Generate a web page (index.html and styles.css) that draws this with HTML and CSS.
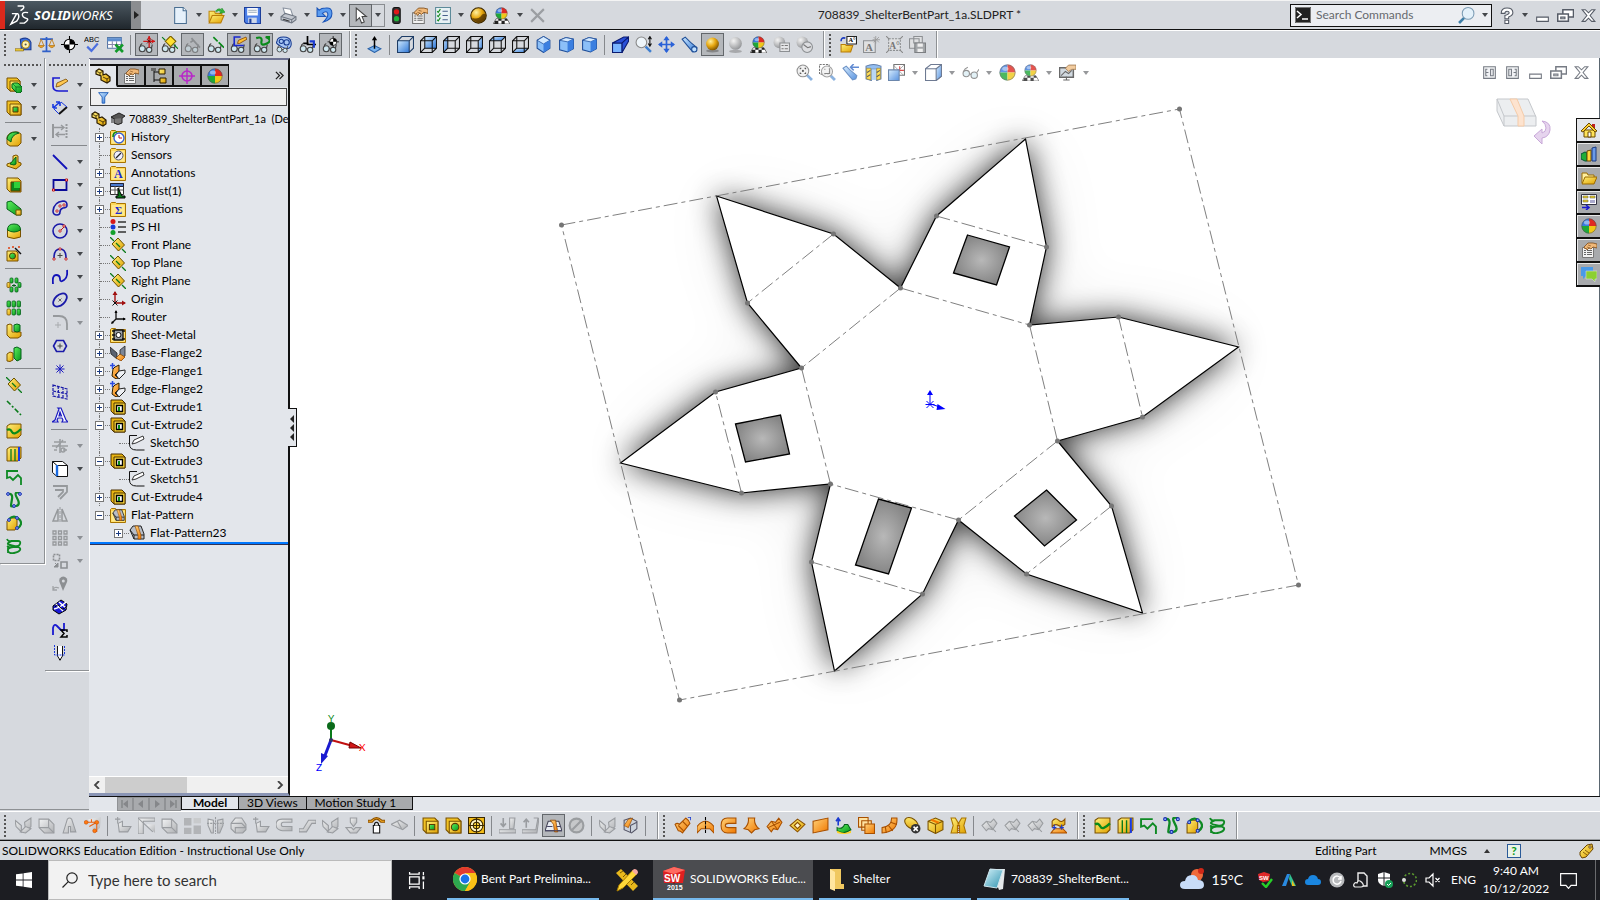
FILE: index.html
```html
<!DOCTYPE html>
<html lang="en">
<head>
  <meta charset="UTF-8">
  <title>708839_ShelterBentPart_1a.SLDPRT *</title>
  <link rel="stylesheet" href="styles.css">
</head>
<body>

<!-- icon sprite -->
<svg class="sprite" width="0" height="0" aria-hidden="true">
  <defs>
    <linearGradient id="gold" x1="0" y1="0" x2="1" y2="1"><stop offset="0" stop-color="#fff07a"/><stop offset="1" stop-color="#e0a000"/></linearGradient>
    <linearGradient id="green" x1="0" y1="0" x2="1" y2="1"><stop offset="0" stop-color="#5df05d"/><stop offset="1" stop-color="#06951c"/></linearGradient>
    <linearGradient id="blue" x1="0" y1="0" x2="1" y2="1"><stop offset="0" stop-color="#cfe9ff"/><stop offset="1" stop-color="#2f78d8"/></linearGradient>
    <linearGradient id="orange" x1="0" y1="0" x2="1" y2="1"><stop offset="0" stop-color="#ffd27a"/><stop offset="1" stop-color="#f07800"/></linearGradient>
    <linearGradient id="grey" x1="0" y1="0" x2="1" y2="1"><stop offset="0" stop-color="#f2f3f4"/><stop offset="1" stop-color="#aeb0b3"/></linearGradient>
    <linearGradient id="teal" x1="0" y1="0" x2="1" y2="1"><stop offset="0" stop-color="#d5f2fa"/><stop offset="1" stop-color="#2f93b0"/></linearGradient>
    <radialGradient id="ballg" cx=".35" cy=".3" r=".75"><stop offset="0" stop-color="#fff0a0"/><stop offset=".5" stop-color="#e8a810"/><stop offset="1" stop-color="#7a5000"/></radialGradient>
    <radialGradient id="balls" cx=".35" cy=".3" r=".8"><stop offset="0" stop-color="#f4f4f4"/><stop offset="1" stop-color="#8a8c8f"/></radialGradient>
    <radialGradient id="hole"><stop offset="0" stop-color="#b8b8b8"/><stop offset="1" stop-color="#868686"/></radialGradient>
  </defs>

  <!-- standard toolbar -->
  <symbol id="new" viewBox="0 0 16 16"><path d="M2.5 .5h8l3 3v12h-11z" fill="#e6f1fb" stroke="#4a6f92"/><path d="M10.5 .5v3h3" fill="#fff" stroke="#4a6f92"/></symbol>
  <symbol id="open" viewBox="0 0 16 16"><path d="M1 14V4h5l1 2h6v3" fill="url(#gold)" stroke="#c08a10"/><path d="M1 15l3-7h11l-3 7z" fill="url(#gold)" stroke="#b87c08"/><path d="M7 4q3-4 6-1V1l3 4-5 1 1-1.5q-2-2-4 0z" fill="#35b53a" stroke="#128a1c" stroke-width=".5"/></symbol>
  <symbol id="save" viewBox="0 0 16 16"><path d="M.5 .5h15v15H2L.5 14z" fill="#4b7fe8" stroke="#1d3f9a"/><path d="M3 1h10v7H3z" fill="#fff"/><path d="M4 3h8M4 5h8" stroke="#9ab"/><path d="M4 10h8v5H4z" fill="#cfd9ea"/><path d="M5 11h2v4H5z" fill="#1d3f9a"/></symbol>
  <symbol id="print" viewBox="0 0 16 16"><path d="M3 1l7 1 2 6H5z" fill="#fff" stroke="#8a93a0"/><path d="M1 9l4-3 10 3v3l-4 3-10-3z" fill="#c3c8d0" stroke="#6d7580"/><path d="M1 9l10 3 4-3M11 12v3" fill="none" stroke="#6d7580"/><path d="M3 11.500l6 2" stroke="#333"/></symbol>
  <symbol id="undo" viewBox="0 0 16 16"><path d="M1 1v8h8L6 6q4-3 5 0t-4 8q8-2 8-8t-6-5q-4 0-6 2z" fill="#5a9cf0" stroke="#1b55b8"/></symbol>
  <symbol id="cursor" viewBox="0 0 16 16"><path d="M4 1v12l3-3 2 5 2.5-1-2-5h4z" fill="#fff" stroke="#444"/></symbol>
  <symbol id="traffic" viewBox="0 0 16 16"><rect x="4.500" y=".5" width="7" height="15" rx="2" fill="#333" stroke="#111"/><circle cx="8" cy="4.500" r="2.500" fill="#e01818"/><circle cx="8" cy="11" r="2.500" fill="#1fb53a"/></symbol>
  <symbol id="props" viewBox="0 0 16 16"><path d="M1.500 5.500h11v10h-11z" fill="#f2f2f2" stroke="#777"/><path d="M3 8.500h2M3 10.500h2M3 12.500h2M6 8.500h5M6 10.500h5M6 12.500h5" stroke="#666"/><path d="M3 5l4-4h5l4 1v4l-4-1-2 2-2-1-2 2-1-2-1 1z" fill="#f0b878" stroke="#7c4a18" stroke-width=".8"/><path d="M7 3l3 1M6 5l3 1" stroke="#7c4a18" stroke-width=".6"/></symbol>
  <symbol id="list" viewBox="0 0 16 16"><path d="M1.500 .5h14v15h-14z" fill="#e8f1f4" stroke="#5d8b9a"/><path d="M3 4l1 1 2-3M3 8l1 1 2-3M3 12l1 1 2-3" fill="none" stroke="#128a1c"/><path d="M8 4h5M8 8h5M8 12h5" stroke="#47608a"/></symbol>
  <symbol id="ball" viewBox="0 0 16 16"><circle cx="8" cy="8" r="7.300" fill="url(#ballg)" stroke="#3c2800"/><path d="M2 10q5 2 8-1 2-4 5-2-1 7-7 7.500-5-1-6-4.500" fill="#4a2c00" opacity=".7"/></symbol>
  <symbol id="sphere" viewBox="0 0 16 16"><path d="M8 8V.5A7.500 7.500 0 0 0 .5 8z" fill="#3a7be0"/><path d="M8 8h7.500A7.500 7.500 0 0 0 8 .5z" fill="#e02a22"/><path d="M8 8H.5A7.500 7.500 0 0 0 8 15.500z" fill="#1fa838"/><path d="M8 8v7.500A7.500 7.500 0 0 0 15.500 8z" fill="#f0c818"/><ellipse cx="6" cy="4.500" rx="3" ry="2" fill="#fff" opacity=".45"/><circle cx="8" cy="8" r="7.200" fill="none" stroke="#555" stroke-width=".6"/></symbol>
  <symbol id="scene" viewBox="0 0 16 16"><path d="M3 11h10l3 5H0z" fill="#fff" stroke="#333" stroke-width=".6"/><path d="M2 13h3v-2h3v2h3v-2h2l1 2h-3v3H8v-3H5v3H1z" fill="#222"/><use href="#sphere" x="2" y="0" width="12" height="12"/></symbol>
  <symbol id="cross" viewBox="0 0 16 16"><path d="M2 2l12 12M14 2L2 14" stroke="#9b9ea2" stroke-width="2"/></symbol>
  <symbol id="term" viewBox="0 0 16 16"><path d="M0 0h16v16H0z" fill="#222"/><path d="M.5 .5h15v15H.5z" fill="none" stroke="#777"/><path d="M2 4l4 3.500L2 11" fill="none" stroke="#fff" stroke-width="1.500"/><path d="M7 12h6" stroke="#fff" stroke-width="1.500"/></symbol>
  <symbol id="lens" viewBox="0 0 16 16"><path d="M6 10l-5 5" stroke="#3f7fa8" stroke-width="2.500"/><circle cx="9.500" cy="6" r="5.500" fill="#e4f1fa" stroke="#7d9db5"/></symbol>
  <symbol id="help" viewBox="0 0 16 16"><path d="M3 6q0-5 5.500-5T14 5.500q0 2.500-4 4V11H6.500V8q4-1 4-2.500T8.500 4 6.500 6zM6.500 12.500H10v3H6.500z" fill="#fff" stroke="#555b66"/></symbol>
  <symbol id="min" viewBox="0 0 16 16"><path d="M2.500 9.500h11v4h-11z" fill="#fff" stroke="#555b66"/></symbol>
  <symbol id="restore" viewBox="0 0 16 16"><path d="M5.500 2.500h10v7h-10z" fill="#fff" stroke="#555b66" stroke-width="1.400"/><path d="M.7 6.500h10v7H.7z" fill="#fff" stroke="#555b66" stroke-width="1.400"/><path d="M3.500 9.500h4V11h-4z" fill="none" stroke="#555b66"/></symbol>
  <symbol id="close" viewBox="0 0 16 16"><path d="M2 2.500h3l3 3 3-3h3L9.500 8l4.500 5.500h-3l-3-3-3 3H2L6.500 8z" fill="#fff" stroke="#555b66"/></symbol>
  <symbol id="paneL" viewBox="0 0 16 16"><path d="M2.500 2.500h11v11h-11z" fill="#eef0f3" stroke="#555b66"/><path d="M6 5H4.500v6H6M4.500 8H7M9 5h2.500v6H9z" fill="none" stroke="#555b66"/></symbol>
  <symbol id="paneR" viewBox="0 0 16 16"><path d="M2.500 2.500h11v11h-11z" fill="#eef0f3" stroke="#555b66"/><path d="M10 5h1.500v6H10M11.500 8H9M4.500 5H7v6H4.500z" fill="none" stroke="#555b66"/></symbol>

  <!-- tools toolbar -->
  <symbol id="tape" viewBox="0 0 16 16"><path d="M5 3q8-3 10 3v7H6z" fill="#3a6fe0" stroke="#1a3a90"/><circle cx="10" cy="8" r="3.500" fill="#fff4b0" stroke="#a87a00"/><circle cx="10" cy="8" r="1" fill="#555"/><path d="M0 12h8v2H0z" fill="#ffdf40" stroke="#7a5a00" stroke-width=".6"/></symbol>
  <symbol id="scale" viewBox="0 0 16 16"><path d="M2 3h12M8 1v13M4 14.500h8" stroke="#2f5fc8" stroke-width="1.600"/><path d="M3 3L.8 9M3 3l2.500 6M13 3l-2.500 6M13 3l2.500 6" stroke="#c07a10" stroke-width=".8"/><path d="M0 9h6q-3 4-6 0M10 9h6q-3 4-6 0" fill="#f5a623" stroke="#a0660a" stroke-width=".6"/></symbol>
  <symbol id="cg" viewBox="0 0 16 16"><path d="M8 0v16M0 8h16" stroke="#000"/><circle cx="8" cy="8" r="5" fill="#fff" stroke="#000"/><path d="M8 8V3a5 5 0 0 1 5 5zM8 8v5a5 5 0 0 1-5-5z" fill="#000"/></symbol>
  <symbol id="xls" viewBox="0 0 16 16"><path d="M.5 1.500h13v10H.5z" fill="#fff" stroke="#5578a8"/><path d="M.5 2h13v3H.5z" fill="#5f8fd0"/><path d="M.5 8h13M5 5v6M9 5v6" stroke="#88a"/><path d="M8 8l7 7M15 8l-7 7" stroke="#129a2a" stroke-width="2.500"/></symbol>
  <symbol id="glasses" viewBox="0 0 16 16"><circle cx="4" cy="12" r="2.800" fill="#cfe8f0" stroke="#444"/><circle cx="10.500" cy="13" r="2.500" fill="#cfe8f0" stroke="#444"/><path d="M6.500 12h2M2 10q0-2 2-3M12.500 12l1-4" fill="none" stroke="#444"/></symbol>
  <symbol id="v-origin" viewBox="0 0 16 16"><use href="#glasses" width="16" height="16"/><path d="M5 5h11M10.500 0v11" stroke="#d01818" stroke-width="1.200"/><path d="M10.500 0l-2 3h4zM16 5l-3-2v4z" fill="#d01818"/><path d="M8.500 3l4 4M12.500 3l-4 4" stroke="#400" stroke-width=".8"/></symbol>
  <symbol id="v-plane" viewBox="0 0 16 16"><use href="#glasses" width="16" height="16"/><path d="M4 5l5-5 5 5-5 5z" fill="#ffe030" stroke="#7a6000"/><path d="M1 1l3 3M12 8l4 4" stroke="#0a7a1a"/></symbol>
  <symbol id="v-temp" viewBox="0 0 16 16"><use href="#glasses" width="16" height="16" opacity=".5"/><path d="M7 2l8 9M6 6l3-2" stroke="#8a8d90" stroke-width="1.600"/></symbol>
  <symbol id="v-axis" viewBox="0 0 16 16"><use href="#glasses" width="16" height="16"/><path d="M6 1l4 4M11 6l1 1M12 7l4 4" stroke="#0a8a1a" stroke-width="1.500"/></symbol>
  <symbol id="v-sketch" viewBox="0 0 16 16"><use href="#glasses" width="16" height="16"/><path d="M10 1H4v8h9" fill="none" stroke="#1a2ad0" stroke-width="1.500"/><path d="M7 7l1-3 7-3 1 2-7 4z" fill="#ffc030" stroke="#7a3a00" stroke-width=".7"/></symbol>
  <symbol id="v-curve" viewBox="0 0 16 16"><use href="#glasses" width="16" height="16"/><path d="M3 2q6-2 5 3t5 2-1-6h4" fill="none" stroke="#0a8a1a" stroke-width="2"/></symbol>
  <symbol id="v-part" viewBox="0 0 16 16"><path d="M1 5q0-4 6-4t7 4-1 6-8-1-4-5z" fill="#a8c6f4" stroke="#173a90"/><circle cx="5" cy="5" r="2" fill="none" stroke="#173a90"/><circle cx="10" cy="6" r="2.500" fill="none" stroke="#173a90"/><use href="#glasses" y="3" width="13" height="13"/></symbol>
  <symbol id="v-live" viewBox="0 0 16 16"><use href="#glasses" width="16" height="16"/><path d="M8 0v8h8M4 7h5" stroke="#000" stroke-width="1.600" fill="none"/><path d="M10 5h4v6" stroke="#1a3ad0" stroke-width="2" fill="none"/></symbol>
  <symbol id="v-cg" viewBox="0 0 16 16"><use href="#glasses" width="16" height="16"/><use href="#cg" x="5" y="0" width="11" height="11"/></symbol>
  <symbol id="normal" viewBox="0 0 16 16"><path d="M2 12l6-3 6 3-6 3.500z" fill="#7ab4f0" stroke="#2a62a8"/><path d="M8 12V2" stroke="#000" stroke-width="1.400"/><path d="M8 0L5.500 4h5z" fill="#000"/></symbol>
  <symbol id="c-front" viewBox="0 0 16 16"><path d="M.5 4.500h11v11H.5z" fill="url(#blue)"/><path d="M.5 4.500h11v11H.5zM.5 4.500l4-4h11v11l-4 4M11.500 4.500l4-4" fill="none" stroke="#1d3c66"/></symbol>
  <symbol id="c-back" viewBox="0 0 16 16"><path d="M4.500 .5h11v11h-11z" fill="url(#blue)"/><path d="M.5 4.500h11v11H.5zM.5 4.500l4-4h11v11l-4 4M11.500 4.500l4-4M4.500 .5v11h11M.5 15.500l4-4" fill="none" stroke="#111"/></symbol>
  <symbol id="c-left" viewBox="0 0 16 16"><path d="M.5 4.500l4-4v11l-4 4z" fill="url(#blue)"/><path d="M.5 4.500h11v11H.5zM.5 4.500l4-4h11v11l-4 4M11.500 4.500l4-4M4.500 .5v11h11M.5 15.500l4-4" fill="none" stroke="#111"/></symbol>
  <symbol id="c-right" viewBox="0 0 16 16"><path d="M11.500 4.500l4-4v11l-4 4z" fill="url(#blue)"/><path d="M.5 4.500h11v11H.5zM.5 4.500l4-4h11v11l-4 4M11.500 4.500l4-4M4.500 .5v11h11M.5 15.500l4-4" fill="none" stroke="#111"/></symbol>
  <symbol id="c-top" viewBox="0 0 16 16"><path d="M.5 4.500l4-4h11l-4 4z" fill="url(#blue)"/><path d="M.5 4.500h11v11H.5zM.5 4.500l4-4h11v11l-4 4M11.500 4.500l4-4M4.500 .5v11h11M.5 15.500l4-4" fill="none" stroke="#111"/></symbol>
  <symbol id="c-bot" viewBox="0 0 16 16"><path d="M.5 15.500l4-4h11l-4 4z" fill="url(#blue)"/><path d="M.5 4.500h11v11H.5zM.5 4.500l4-4h11v11l-4 4M11.500 4.500l4-4M4.500 .5v11h11M.5 15.500l4-4" fill="none" stroke="#111"/></symbol>
  <symbol id="c-iso" viewBox="0 0 16 16"><path d="M8 .5l6 3.500v7.500l-6 4-6-4V4z" fill="#8cc0f8" stroke="#1c4c98"/><path d="M8 .5l6 3.500-6 3.500L2 4z" fill="#d4eaff" stroke="#1c4c98" stroke-width=".7"/><path d="M8 7.500L14 4v7.500l-6 4z" fill="#3b7fe0"/></symbol>
  <symbol id="c-tri" viewBox="0 0 16 16"><path d="M1.500 4l6-2.500 7 1.500v9L9 15l-7.500-2z" fill="#8cc0f8" stroke="#1c4c98"/><path d="M1.500 4l6-2.500 7 1.500L9 5.500z" fill="#d4eaff" stroke="#1c4c98" stroke-width=".7"/><path d="M9 5.500L14.500 3v9L9 15z" fill="#3b7fe0"/></symbol>
  <symbol id="persp" viewBox="0 0 16 16"><path d="M.5 6.500h9v9h-9z" fill="#7ab4ff" stroke="#0a1a70"/><path d="M.5 6.500L11 1h4.500l-6 5.500zM9.500 6.500l6-5.500v4l-6 10.500z" fill="#2a50d8" stroke="#0a1a70"/></symbol>
  <symbol id="zoomio" viewBox="0 0 16 16"><circle cx="6" cy="6" r="5" fill="#eef5fa" stroke="#888"/><path d="M10 10l5 5" stroke="#3f7fd0" stroke-width="2.400"/><path d="M14 1v8M12.500 3L14 .5 15.500 3M12.500 7L14 9.500 15.500 7" stroke="#111" fill="none"/></symbol>
  <symbol id="pan" viewBox="0 0 16 16"><path d="M8 1v14M1 8h14" stroke="#2a62d8" stroke-width="1.600"/><path d="M8 0l3 4H5zM8 16l3-4H5zM0 8l4-3v6zM16 8l-4-3v6z" fill="#2a62d8"/></symbol>
  <symbol id="flash" viewBox="0 0 16 16"><path d="M1 3l3-2 5 5 6 5-1 3-3 1-5-6z" fill="url(#blue)" stroke="#1f4f98"/><circle cx="12.500" cy="12.500" r="2.500" fill="#bfe0ff" stroke="#1f4f98"/></symbol>
  <symbol id="goldball" viewBox="0 0 16 16"><ellipse cx="8" cy="14" rx="6" ry="1.500" fill="#555" opacity=".5"/><circle cx="8" cy="7.500" r="6" fill="url(#ballg)"/></symbol>
  <symbol id="greyball" viewBox="0 0 16 16"><ellipse cx="8" cy="14.500" rx="6" ry="1.500" fill="#777" opacity=".5"/><circle cx="8" cy="7" r="6" fill="url(#balls)"/></symbol>
  <symbol id="greylist" viewBox="0 0 16 16"><circle cx="6" cy="6" r="5.500" fill="url(#balls)"/><path d="M6.500 6.500h9v8h-9z" fill="#e4e5e7" stroke="#8c8f92"/><path d="M8 9h2M8 12h2M11 9h3M11 12h3" stroke="#777"/></symbol>
  <symbol id="greyclock" viewBox="0 0 16 16"><circle cx="6" cy="6" r="5.500" fill="url(#balls)"/><circle cx="10.500" cy="10.500" r="5" fill="#dcdde0" stroke="#8c8f92"/><path d="M7 8l4 3 3-1" stroke="#777" fill="none"/></symbol>
  <symbol id="an-save" viewBox="0 0 16 16"><path d="M.5 2.500h9v9h-9zM4.500 .5h8v6h-8z" fill="#dfe0e2" stroke="#8c8f92"/><path d="M5.500 6.500h10v9h-10z" fill="#a4a7aa" stroke="#7c7f82"/><path d="M8 7h5v3H8zM8 12h5v3H8z" fill="#eee"/></symbol>

  <!-- heads-up view -->
  <symbol id="zfit" viewBox="0 0 16 16"><path d="M10 10l5 5" stroke="#6f9fd8" stroke-width="2.600"/><circle cx="6.500" cy="6.500" r="5.500" fill="#eee" stroke="#777"/><path d="M4 5V4h1M8 4h1v1M9 8v1H8M5 9H4V8" stroke="#333" fill="none"/><circle cx="6.500" cy="6.500" r="1" fill="#333"/></symbol>
  <symbol id="zarea" viewBox="0 0 16 16"><path d="M11 11l4 4" stroke="#6f9fd8" stroke-width="2.600"/><path d="M.5 .5h9v9h-9z" fill="none" stroke="#555" stroke-dasharray="2 1"/><circle cx="7.500" cy="7" r="5.200" fill="#eee" fill-opacity=".8" stroke="#888"/><path d="M5 5h1M5 9h5V4" stroke="#666" fill="none"/></symbol>
  <symbol id="prev" viewBox="0 0 16 16"><path d="M1 4l3-2 4 4 6 5-1 3-3 1-5-6z" fill="url(#blue)" stroke="#4a78b8"/><path d="M8 3h8M11 0L8 3l3 3" stroke="#3a6fc8" stroke-width="1.400" fill="none"/></symbol>
  <symbol id="section" viewBox="0 0 16 16"><path d="M1 2q7-3 14 0v12l-4 1.500V5H6v10.500L1 14z" fill="#7ab0f0" stroke="#3a5f98"/><path d="M6 5h5v10H6z" fill="#a8ccf4"/><path d="M1.500 4h4v11l-4-1zM11 4h3.500v10L11 15z" fill="#ffd428" stroke="#776010" stroke-width=".6"/><path d="M2 8l3-2M2 12l3-2M11 8l3-2M11 12l3-2" stroke="#333"/></symbol>
  <symbol id="vorient" viewBox="0 0 16 16"><path d="M5.500 .5h10v10h-10z" fill="#fff" stroke="#555"/><path d="M5 1l10 10M15 1l-4 4" stroke="#777" stroke-width=".7"/><path d="M11 2v4M9 6h6" stroke="#d02020"/><path d="M.5 5.500h10v10H.5z" fill="url(#blue)" stroke="#486a98"/></symbol>
  <symbol id="dstyle" viewBox="0 0 16 16"><path d="M.5 4.500l5-4h10v11l-5 4H.5z" fill="#fff" stroke="#4a5a78"/><path d="M10.500 4.500l5-4v11l-5 4z" fill="url(#blue)" stroke="#4a5a78"/><path d="M.5 4.500h10" stroke="#4a5a78"/></symbol>
  <symbol id="specs" viewBox="0 0 16 16"><circle cx="4" cy="9" r="3" fill="#dceef5" stroke="#777"/><circle cx="11.500" cy="10.500" r="3" fill="#dceef5" stroke="#777"/><path d="M7 9l1.500 1M1.500 7q1-3 4-4M14 8l2-3" fill="none" stroke="#777"/></symbol>
  <symbol id="monitor" viewBox="0 0 16 16"><path d="M.5 3.500h13v9H.5z" fill="#c8d2da" stroke="#444" stroke-width="1.400"/><path d="M4 15h6M7 12v3M2 11l4-4 3 2 3-3" stroke="#444" fill="none"/><path d="M6 4l3-3h7v4h-4L9 7z" fill="#f0c088" stroke="#8a5a28" stroke-width=".8"/></symbol>

  <!-- features rail -->
  <symbol id="extrude" viewBox="0 0 16 16"><path d="M1 1h10l3 3v8l-2 2H4l-3-3z" fill="#f2c224" stroke="#7a5200"/><path d="M4 4h10v8l-2 2H4z" fill="url(#gold)" stroke="#7a5200"/><path d="M6 7l2-1h4l4 4v4l-2 2h-3l-5-5z" fill="url(#green)" stroke="#04621a"/><path d="M10 10h5M10 10v5M10 10L7 7" stroke="#04621a" fill="none" stroke-width=".7"/></symbol>
  <symbol id="cut" viewBox="0 0 16 16"><path d="M1 1h11l3 3v11H4l-3-3z" fill="#f2c224" stroke="#7a5200"/><path d="M4 4h11v11H4z" fill="url(#gold)" stroke="#7a5200"/><path d="M7 7h5v5H7z" fill="url(#green)" stroke="#5a3c00"/></symbol>
  <symbol id="fillet" viewBox="0 0 16 16"><path d="M1 6q2-5 8-5h3l3 2v9l-3 3H4l-3-2z" fill="url(#gold)" stroke="#7a5200"/><path d="M1 8q1-7 9-7l3 1q-8 2-8 9z" fill="url(#green)" stroke="#04621a"/></symbol>
  <symbol id="rib" viewBox="0 0 16 16"><path d="M1 10l6-2V2l3-1 2 1v6l3 1v2l-5 4-9-3z" fill="url(#gold)" stroke="#7a5200"/><path d="M4 10l6-7v7l-2 1z" fill="url(#green)" stroke="#04621a"/></symbol>
  <symbol id="shell" viewBox="0 0 16 16"><path d="M1 1h11l3 3v11H4l-3-3z" fill="url(#gold)" stroke="#7a5200"/><path d="M5 5h9v9H5z" fill="#088a1c" stroke="#5a3c00"/><path d="M8 5h6v6H8z" fill="#2fd03a"/></symbol>
  <symbol id="draft" viewBox="0 0 16 16"><path d="M1 2l4-1 10 8v6h-5L1 9z" fill="url(#green)" stroke="#04621a"/><path d="M10 10h5v5h-5z" fill="url(#gold)" stroke="#7a5200"/></symbol>
  <symbol id="dome" viewBox="0 0 16 16"><path d="M1.500 6v8q6.500 3 13 0V6z" fill="url(#gold)" stroke="#7a5200"/><path d="M1.500 7q0-6 6.500-6t6.500 6q-6.500 4-13 0z" fill="url(#green)" stroke="#04621a"/></symbol>
  <symbol id="hole-w" viewBox="0 0 16 16"><path d="M1 5h9l2 2v8H1z" fill="url(#gold)" stroke="#7a5200"/><circle cx="6.500" cy="10" r="3" fill="url(#green)" stroke="#5a3c00"/><path d="M9 2l6 6" stroke="#111" stroke-width="1.400"/><path d="M2 2h2M6 1h2M12 1h2" stroke="#e04010" stroke-width="1.500"/></symbol>
  <symbol id="cpat" viewBox="0 0 16 16"><g fill="url(#green)" stroke="#04621a" stroke-width=".8"><rect x="4" y="1" width="3" height="5" rx="1"/><rect x="9" y="1" width="3" height="5" rx="1"/><rect x="12" y="5.500" width="3" height="5" rx="1"/><rect x="4" y="10" width="3" height="5" rx="1"/><rect x="9" y="10" width="3" height="5" rx="1"/></g><rect x="1" y="5.500" width="3" height="5" rx="1" fill="url(#gold)" stroke="#7a5200" stroke-width=".8"/><path d="M8 7v3M6 8.500h4" stroke="#04621a"/></symbol>
  <symbol id="lpat" viewBox="0 0 16 16"><g fill="url(#green)" stroke="#04621a" stroke-width=".8"><rect x="1" y="1" width="3.500" height="6" rx="1"/><rect x="6" y="1" width="3.500" height="6" rx="1"/><rect x="11" y="1" width="3.500" height="6" rx="1"/><rect x="6" y="9" width="3.500" height="6" rx="1"/><rect x="11" y="9" width="3.500" height="6" rx="1"/></g><rect x="1" y="9" width="3.500" height="6" rx="1" fill="url(#gold)" stroke="#7a5200" stroke-width=".8"/></symbol>
  <symbol id="move" viewBox="0 0 16 16"><path d="M1 2l3-1 2 1v7h9v4l-3 2H4l-3-3z" fill="url(#gold)" stroke="#7a5200"/><path d="M8 2l3-1 3 1v6l-3 1-3-1z" fill="url(#green)" stroke="#04621a"/></symbol>
  <symbol id="mirror" viewBox="0 0 16 16"><path d="M1 8l3-2 3 1v7l-3 1.500L1 15z" fill="url(#gold)" stroke="#7a5200"/><path d="M8 2l3-1 4 2v10l-4 2-3-3z" fill="url(#green)" stroke="#04621a"/></symbol>
  <symbol id="plane" viewBox="0 0 16 16"><path d="M0 0l4 4M12 12l4 4" stroke="#0a7a1a" stroke-width="1.300"/><path d="M2 7l6-6 6.500 7-6 6z" fill="url(#gold)" stroke="#6a5000"/><path d="M6 6l4 4" stroke="#0a7a1a" stroke-width="1.200"/></symbol>
  <symbol id="axis" viewBox="0 0 16 16"><path d="M1 1l14 14" stroke="#0a7a1a" stroke-width="1.600" stroke-dasharray="5 2 2 2"/></symbol>
  <symbol id="split" viewBox="0 0 16 16"><path d="M1 3l3-2h11v11l-3 3H1z" fill="url(#gold)" stroke="#7a5200"/><path d="M1 7q3-2 5 2t9-3" fill="none" stroke="#0a8a1a" stroke-width="2.200"/></symbol>
  <symbol id="proj" viewBox="0 0 16 16"><path d="M1 3l3-2h11v11l-3 3H1z" fill="url(#gold)" stroke="#7a5200"/><path d="M5 3v12M9 3v12" stroke="#0a7a1a" stroke-width="1.300"/><path d="M13 1v14" stroke="#1a3ae0" stroke-width="2"/></symbol>
  <symbol id="comp" viewBox="0 0 16 16"><path d="M12 2H1v7l3-1 3 3 5-5 3 3v7" fill="none" stroke="#0f8a24" stroke-width="1.800"/></symbol>
  <symbol id="xyz" viewBox="0 0 16 16"><path d="M2 2q5-1 4 5t-1 7 5 0 1-8 3-5" fill="none" stroke="#0f8a24" stroke-width="2.200"/><g fill="#8fb8ff" stroke="#1a2ab0"><circle cx="2" cy="2" r="1.400"/><circle cx="14" cy="2" r="1.400"/><circle cx="8" cy="14" r="1.400"/></g></symbol>
  <symbol id="thru" viewBox="0 0 16 16"><path d="M1 6l3-3h7v9l-2 3H1z" fill="url(#gold)" stroke="#7a5200"/><path d="M3 4q5-5 10 0t-2 10" fill="none" stroke="#0f8a24" stroke-width="2.200"/><g fill="#8fb8ff" stroke="#1a2ab0"><circle cx="3" cy="5" r="1.400"/><circle cx="11" cy="3" r="1.400"/><circle cx="11" cy="13" r="1.400"/></g></symbol>
  <symbol id="helix" viewBox="0 0 16 16"><path d="M1 1q1 3 4 2h7q3 0 2 3t-6 2-6-2 4-3M1 8q3 2 6 1h5q3 1 2 3t-6 3-6-2 5-4M2 15V9" fill="none" stroke="#0f8a24" stroke-width="1.800"/></symbol>

  <!-- sketch rail -->
  <symbol id="sketch" viewBox="0 0 16 16"><path d="M8 1H1v8q0 5 6 5h9" fill="none" stroke="#1a1ad0" stroke-width="1.600"/><path d="M4 10l1-4 9-4 2 2-8 5z" fill="#ffc850" stroke="#7a4a00" stroke-width=".8"/></symbol>
  <symbol id="dim" viewBox="0 0 16 16"><path d="M7 14l8-7" stroke="#111" stroke-width="2"/><path d="M1 8l7-6M1 8V4M1 8h4M8 2H4M8 2v4" stroke="#1a3ae0" stroke-width="1.600" fill="none"/><path d="M2 9l5 5M9 2l6 5" stroke="#1a3ae0"/></symbol>
  <symbol id="rel" viewBox="0 0 16 16"><path d="M1 1v14" stroke="#96999c" stroke-width="2"/><path d="M14.500 1v14" stroke="#96999c" stroke-width="2" stroke-dasharray="2 1"/><path d="M2 4.500h9M9 2l3 2.500L9 7M13 11.500H4M7 9l-3 2.500L7 14" stroke="#96999c" stroke-width="1.400" fill="none"/></symbol>
  <symbol id="line" viewBox="0 0 16 16"><path d="M1 1l14 14" stroke="#1212b8" stroke-width="1.800"/></symbol>
  <symbol id="rect" viewBox="0 0 16 16"><path d="M1.500 3h13v10h-13z" fill="none" stroke="#0a0a98" stroke-width="1.800"/><path d="M.5 12h2v2h-2zM13.500 2h2v2h-2z" fill="#fff" stroke="#c01010"/></symbol>
  <symbol id="slot" viewBox="0 0 16 16"><path d="M5 15q-4 0-4-4Q2 2 11 1q4 0 4 4 0 3-4 3-3 1-3 4t-3 3z" fill="none" stroke="#1a1aa8" stroke-width="1.600"/><path d="M4 10h2v2H4zM7 5h2v2H7zM11 4h2v2h-2z" fill="#fff" stroke="#c01010" stroke-width=".8"/></symbol>
  <symbol id="circ" viewBox="0 0 16 16"><circle cx="8" cy="8" r="7" fill="none" stroke="#1a1aa8" stroke-width="1.600"/><path d="M8 8l4-4" stroke="#c01010"/><path d="M7 7h2v2H7zM11 2h2v2h-2z" fill="#fff" stroke="#c01010" stroke-width=".8"/></symbol>
  <symbol id="arc" viewBox="0 0 16 16"><path d="M2 12q0-9 6-9t6 9" fill="none" stroke="#1a1aa8" stroke-width="1.600"/><path d="M8 7v5M5.500 9.500h5" stroke="#444"/><path d="M1 12h2v2H1zM13 12h2v2h-2zM7 2h2v2H7z" fill="#fff" stroke="#c01010" stroke-width=".8"/></symbol>
  <symbol id="spline" viewBox="0 0 16 16"><path d="M1 15Q0 6 4 6t4 4 4 1 3-10" fill="none" stroke="#1212b8" stroke-width="1.800"/></symbol>
  <symbol id="ell" viewBox="0 0 16 16"><ellipse cx="8" cy="8" rx="8" ry="5" transform="rotate(-42 8 8)" fill="none" stroke="#1a1aa8" stroke-width="1.800"/><path d="M6.500 6.500l3 3M9.500 6.500l-3 3" stroke="#444" stroke-width=".8"/></symbol>
  <symbol id="sfil" viewBox="0 0 16 16"><path d="M1 1h6q8 0 8 8v6" fill="none" stroke="#96999c" stroke-width="1.800"/><path d="M6 7v6M3 10h6" stroke="#a8abae"/></symbol>
  <symbol id="poly" viewBox="0 0 16 16"><path d="M4.500 2.500h7l3 5.500-3 5.500h-7L1.500 8z" fill="none" stroke="#1a1aa8" stroke-width="1.600"/><path d="M8 5.500v5M5.500 8h5" stroke="#444"/></symbol>
  <symbol id="pt" viewBox="0 0 16 16"><path d="M8 3.500v9M3.500 8h9M4.500 4.500l7 7M11.500 4.500l-7 7" stroke="#1a1ac0"/></symbol>
  <symbol id="splane" viewBox="0 0 16 16"><path d="M1 1l14 4v10L1 12zM1 7l14 3M6 2l1 11M11 3v11" fill="none" stroke="#1a1aa8" stroke-width="1.200" stroke-dasharray="3 1"/></symbol>
  <symbol id="stext" viewBox="0 0 16 16"><path d="M0 15l3-2L7 2 6 1h3l5 12 2 2h-6l1-2-1-2H6l-1 2 1 2zM7 9h2.500L8 5z" fill="#fff" stroke="#1a1ac0" stroke-width="1.200"/></symbol>
  <symbol id="trim" viewBox="0 0 16 16"><path d="M0 8h16M8 1v14" stroke="#9a9da0" stroke-width="1.600"/><path d="M2 4h12M2 12h3M11 12h4M4 10l7-8" stroke="#9a9da0" stroke-width="1.300"/><circle cx="11" cy="12" r="2" fill="none" stroke="#9a9da0" stroke-width="1.400"/></symbol>
  <symbol id="conv" viewBox="0 0 16 16"><path d="M.5 .5h10l5 4v11H5l-4.500-4z" fill="#fff" stroke="#111"/><path d="M.5 .5l4.500 4h10.500M5 4.500v11" fill="none" stroke="#111"/><path d="M5 4v11" stroke="#1a6ae0" stroke-width="2.400"/></symbol>
  <symbol id="off" viewBox="0 0 16 16"><path d="M1 2h14v6l-7 7M3 6h8v2l-5 5" fill="none" stroke="#96999c" stroke-width="1.800"/></symbol>
  <symbol id="smir" viewBox="0 0 16 16"><path d="M6 2L1 14h5zM10 2l5 12h-5z" fill="none" stroke="#96999c" stroke-width="1.500"/><path d="M8 0v16" stroke="#96999c" stroke-dasharray="3 1"/></symbol>
  <symbol id="slin" viewBox="0 0 16 16"><path d="M1 1h3v3H1zM6.500 1h3v3h-3zM12 1h3v3h-3zM1 6.500h3v3H1zM6.500 6.500h3v3h-3zM12 6.500h3v3h-3zM1 12h3v3H1zM6.500 12h3v3h-3zM12 12h3v3h-3z" fill="none" stroke="#96999c" stroke-width="1.300"/></symbol>
  <symbol id="smove" viewBox="0 0 16 16"><path d="M1.500 1.500h6v6h-6z" fill="none" stroke="#8c8f92" stroke-width="1.600" stroke-dasharray="2 1"/><path d="M9 9h6v6H9z" fill="none" stroke="#8c8f92" stroke-width="1.600"/><path d="M3 10l3 3M6 10v4H2z" fill="#8c8f92" stroke="#8c8f92"/></symbol>
  <symbol id="pin" viewBox="0 0 16 16"><path d="M11 15L7.500 6a4 4 0 1 1 7.500 0z" fill="#8c8f92"/><circle cx="11.300" cy="5" r="1.500" fill="#d6d9de"/><path d="M1 14q1-4 6-2M1 10v4h4" fill="none" stroke="#a0a3a6" stroke-width="1.300"/></symbol>
  <symbol id="bgrid" viewBox="0 0 16 16"><path d="M1 7l8-6 6 4-1 6-7 4-6-4z" fill="#1a1ad8" stroke="#000"/><path d="M4 5l7 7M7 3l7 6M2 10q6-1 12-7" stroke="#fff" stroke-width="1.500" fill="none"/><path d="M3 8q3-4 5 0t6 0" stroke="#000" fill="none"/></symbol>
  <symbol id="ssig" viewBox="0 0 16 16"><path d="M1 13V6q1-5 4-2t4 4h3V1" fill="none" stroke="#1a1ad0" stroke-width="1.800"/><path d="M15 10V8H9l3 3.500L9 15h6v-2" fill="none" stroke="#000" stroke-width="1.500"/></symbol>
  <symbol id="spen" viewBox="0 0 16 16"><path d="M5.500 1v10L8 15l2.500-4V1" fill="#fff" stroke="#111"/><path d="M2.500 0v10h10V0" fill="none" stroke="#1a3ae0" stroke-dasharray="2 1"/><path d="M7 14l1 2 1-2z"/></symbol>

  <!-- feature tree -->
  <symbol id="part" viewBox="0 0 16 16"><path d="M1 3l3-2 4 2v4l3-1 4 3v4l-3 2-6-3V8L1 6z" fill="url(#gold)" stroke="#2a1c00" stroke-width="1.200"/><path d="M1 3l4 2 3-2M5 5v3M8 9l4 2 3-2M12 11v4" fill="none" stroke="#2a1c00" stroke-width=".8"/></symbol>
  <symbol id="config" viewBox="0 0 16 16"><path d="M3 1v13M3 4h5M3 12h6" stroke="#111" fill="none"/><path d="M8 1h6v5H8zM9 10h6v5H9z" fill="url(#gold)" stroke="#2a1c00"/><path d="M0 0h5v3H0z" fill="#666"/></symbol>
  <symbol id="dimx" viewBox="0 0 16 16"><circle cx="8" cy="8" r="5" fill="none" stroke="#b828c8" stroke-width="1.600"/><path d="M8 0v16M0 8h16" stroke="#b828c8" stroke-width="1.400"/></symbol>
  <symbol id="funnel" viewBox="0 0 16 16"><path d="M3 3h11l-4 5v7H7V8z" fill="url(#blue)" stroke="#1a5ab8"/></symbol>
  <symbol id="cap" viewBox="0 0 16 16"><path d="M1 6l8-4 6 3-7 5z" fill="#555" stroke="#222"/><path d="M4 8v4q4 3 8 0V7" fill="#777" stroke="#222"/><path d="M2 6v6" stroke="#222"/></symbol>
  <symbol id="fold" viewBox="0 0 16 16"><path d="M.5 2.500l1-1h4l1 1h9v13H.5z" fill="#ffd95a" stroke="#a87400"/><path d="M1.500 4h13v10.500h-13z" fill="#ffe88a"/></symbol>
  <symbol id="t-hist" viewBox="0 0 16 16"><use href="#fold" width="16" height="16"/><circle cx="9" cy="9" r="5" fill="#fff" stroke="#3a5fd0" stroke-width="1.400"/><path d="M9 6v3h3" stroke="#c01010" fill="none"/><path d="M3 8q0-5 4-5" stroke="#0a8a1a" stroke-width="1.600" fill="none"/></symbol>
  <symbol id="t-sens" viewBox="0 0 16 16"><use href="#fold" width="16" height="16"/><circle cx="8.500" cy="8.500" r="4.500" fill="#eef" stroke="#556"/><path d="M6 11l5-5" stroke="#222" stroke-width="1.300"/></symbol>
  <symbol id="t-cut" viewBox="0 0 16 16"><path d="M.5 .5h13v11H.5z" fill="#fff" stroke="#333"/><path d="M.5 .5h13v3H.5z" fill="#4a7ad0" stroke="#223"/><path d="M.5 7h13M5 3v9M9 3v9" stroke="#555"/><path d="M8 5l4 8h3v2H6v-2h2z" fill="#0a7a1a" stroke="#000"/></symbol>
  <symbol id="t-ps" viewBox="0 0 16 16"><circle cx="3" cy="2.500" r="2.500" fill="#d81818"/><circle cx="3" cy="8" r="2.500" fill="#1a3ad8"/><circle cx="3" cy="13.500" r="2.500" fill="#12a02a"/><path d="M8 3h8M8 8h8M8 13h8" stroke="#333" stroke-width="1.500"/></symbol>
  <symbol id="t-orig" viewBox="0 0 16 16"><path d="M5 1v11h10" fill="none" stroke="#a01010" stroke-width="1.400"/><path d="M5 0L2.500 4h5zM16 12l-4-2.500v5z" fill="#a01010"/><path d="M2.500 9.500l5 5M7.500 9.500l-5 5" stroke="#111"/></symbol>
  <symbol id="t-rout" viewBox="0 0 16 16"><path d="M6 2v8h9M6 10l-4 4" fill="none" stroke="#111" stroke-width="1.300"/><path d="M6 1L4.500 4h3zM16 10l-3-1.500v3zM1 15l1-3 2 2z"/></symbol>
  <symbol id="t-sm" viewBox="0 0 16 16"><use href="#fold" width="16" height="16"/><path d="M4 3h9v10H4z" fill="#9aa0a8" stroke="#111" stroke-width="1.300"/><circle cx="8.500" cy="8" r="2.500" fill="#fff" stroke="#111"/><path d="M2 4h3M2 8h3M2 12h3M12 4h3M12 12h3" stroke="#111" stroke-width="1.300"/></symbol>
  <symbol id="t-base" viewBox="0 0 16 16"><path d="M0 2l7 6v6L1 9z" fill="#5a6270" stroke="#222" stroke-width=".8"/><path d="M10 5l5-4v10l-5 3z" fill="#7c8698" stroke="#222" stroke-width=".8"/><path d="M6 13l4-4 5 3-4 4z" fill="url(#orange)" stroke="#8a4400" stroke-width=".8"/></symbol>
  <symbol id="t-edge" viewBox="0 0 16 16"><path d="M2.500 0v6M0 2.500h5" stroke="#2a4ae0" stroke-width="1.500"/><path d="M3 6l2-2 4-2v6l-4 4 3 3-2 1-4-3z" fill="url(#orange)" stroke="#2a1c00"/><path d="M6 12l3-4 6-1v3l-6 6z" fill="#eef0f4" stroke="#222"/></symbol>
  <symbol id="t-ext" viewBox="0 0 16 16"><path d="M1 1h11l3 3v11H4l-3-3z" fill="#e8b410" stroke="#4a3000"/><path d="M4 4h11v11H4z" fill="#ffd83a" stroke="#4a3000"/><path d="M6.500 6.500h6v6h-6z" fill="#fff" stroke="#000" stroke-width="1.400"/><path d="M8 8h2v4H8z" fill="#0a8a1a"/></symbol>
  <symbol id="t-sk" viewBox="0 0 16 16"><path d="M8 .5H.5V9q0 6 7 6h8" fill="none" stroke="#111"/><path d="M3 9l2-4 9-4 1 3-8 4z" fill="#fff" stroke="#222" stroke-width=".9"/></symbol>
  <symbol id="t-flat" viewBox="0 0 16 16"><path d="M1 5l3-4h8l3 8v5H5z" fill="#b8bec8" stroke="#222"/><path d="M1 5l4 5h10M5 10v4" stroke="#222" fill="none"/><path d="M6 1h3l3 9v4H9v-4z" fill="url(#orange)" stroke="#8a4400" stroke-width=".6"/></symbol>
  <symbol id="t-fp" viewBox="0 0 16 16"><use href="#fold" width="16" height="16"/><use href="#t-flat" x="2" y="2" width="13" height="13"/></symbol>

  <!-- sheet metal toolbar -->
  <symbol id="g-base" viewBox="0 0 16 16"><path d="M0 3l6 5v6L1 9zM9 5l6-4v8l-5 5z" fill="url(#grey)" stroke="#999ca0"/><path d="M5 14l5-5 5 2-5 4z" fill="url(#grey)" stroke="#999ca0"/></symbol>
  <symbol id="g-box" viewBox="0 0 16 16"><path d="M1 2h9l5 5v8H6l-5-5z" fill="url(#grey)" stroke="#999ca0"/><path d="M1 10h9l5 5M10 2v8" stroke="#999ca0" fill="none"/></symbol>
  <symbol id="g-loft" viewBox="0 0 16 16"><path d="M6 2q2-2 4 0l4 12H9V9H7v6H2z" fill="url(#grey)" stroke="#999ca0"/></symbol>
  <symbol id="g-bend" viewBox="0 0 16 16"><path d="M4 2l12-2-1 10-5 5z" fill="url(#grey)"/><path d="M2 5h10v9M7 5V2M5 9l7-4" stroke="#e86010" fill="none"/><g fill="#ff7a10" stroke="#c04800" stroke-width=".5"><circle cx="2" cy="5" r="1.800"/><circle cx="12" cy="5" r="1.800"/><circle cx="10" cy="13" r="1.800"/></g></symbol>
  <symbol id="g-edge" viewBox="0 0 16 16"><path d="M2.500 0v6M0 2h5" stroke="#999ca0"/><path d="M3 6l4-2v5h8l-3 5H4z" fill="url(#grey)" stroke="#999ca0"/></symbol>
  <symbol id="g-miter" viewBox="0 0 16 16"><path d="M0 1h16v3H5v12H0z" fill="url(#grey)" stroke="#999ca0"/><path d="M8 7h8v8z" fill="url(#grey)"/><path d="M0 1l14 13" stroke="#999ca0"/></symbol>
  <symbol id="g-tabs" viewBox="0 0 16 16"><path d="M0 1h7v7H0zM9 8h7v8H9zM0 10h7v6H0z" fill="#b2b4b7"/><path d="M9 1h7v5H9z" fill="#c8cacc"/></symbol>
  <symbol id="g-gears" viewBox="0 0 16 16"><path d="M1 2l5 1v12H4L1 8zM15 2l-5 1v12h2l3-7z" fill="url(#grey)" stroke="#999ca0"/><path d="M8 0v16M0 6h16" stroke="#999ca0" stroke-dasharray="2 1"/></symbol>
  <symbol id="g-hem" viewBox="0 0 16 16"><path d="M15 2H6Q0 2 0 7t6 6h9V9H7Q5 9 5 7t2-2h8z" fill="url(#grey)" stroke="#999ca0"/></symbol>
  <symbol id="g-jog" viewBox="0 0 16 16"><path d="M0 11h4l5-8h7v3h-4l-5 8H0z" fill="url(#grey)" stroke="#999ca0"/></symbol>
  <symbol id="g-corner" viewBox="0 0 16 16"><path d="M1 6l4-5h6l4 6v5l-3 3H5l-4-4z" fill="url(#grey)" stroke="#999ca0"/><path d="M1 6h10l4 4M5 15v-5h10" stroke="#999ca0" fill="none"/></symbol>
  <symbol id="g-punch" viewBox="0 0 16 16"><path d="M5 1h6v4L8 9 5 5z" fill="url(#grey)" stroke="#999ca0"/><path d="M1 10h5l2 2 2-2h5l-4 5H5z" fill="url(#grey)" stroke="#999ca0"/></symbol>
  <symbol id="form" viewBox="0 0 16 16"><path d="M5 8h6v7H5z" fill="#fff" stroke="#111"/><path d="M6 8q0-3 2-3t2 3" fill="#ddd" stroke="#111"/><path d="M0 5h4q4-6 8 0h4V3h-3Q8-2 3 3H0z" fill="#ffb020" stroke="#8a5000"/></symbol>
  <symbol id="g-swept" viewBox="0 0 16 16"><path d="M0 7l8-4 8 5-5 4z" fill="url(#grey)" stroke="#999ca0"/><path d="M6 4l4 7" stroke="#999ca0"/></symbol>
  <symbol id="cut2" viewBox="0 0 16 16"><path d="M1 1h11l3 3v11H4l-3-3z" fill="#f2c224" stroke="#7a5200"/><path d="M4 4h11v11H4z" fill="url(#gold)" stroke="#7a5200"/><circle cx="9.500" cy="9.500" r="3.500" fill="url(#green)" stroke="#5a3c00"/></symbol>
  <symbol id="vent" viewBox="0 0 16 16"><path d="M.5 .5h15v15H.5z" fill="#f4bc18" stroke="#3a2800"/><circle cx="8" cy="8" r="6" fill="#fff6c8" stroke="#3a2800"/><circle cx="8" cy="8" r="3" fill="#ffd83a" stroke="#3a2800"/><path d="M8 1v14M1 8h14" stroke="#3a2800"/></symbol>
  <symbol id="g-unf" viewBox="0 0 16 16"><path d="M4 1v8M1.500 6L4 9l2.500-3" stroke="#999ca0" stroke-width="1.500" fill="none"/><path d="M10 1h5l-1 10h-4z" fill="url(#grey)" stroke="#999ca0"/><path d="M0 12h16v3H0z" fill="url(#grey)" stroke="#999ca0"/></symbol>
  <symbol id="g-fold" viewBox="0 0 16 16"><path d="M4 10V2M1.500 5L4 2l2.500 3" stroke="#999ca0" stroke-width="1.500" fill="none"/><path d="M11 1h4l-2 11H0v3h14l2-14" fill="url(#grey)" stroke="#999ca0"/></symbol>
  <symbol id="flat" viewBox="0 0 16 16"><path d="M0 13L3 4h10l3 9z" fill="#e8ecf2" stroke="#445"/><path d="M5 3h5l2 11H9L8 7z" fill="url(#orange)" stroke="#8a4400" stroke-width=".7"/><path d="M0 13h16M2 9h5M11 9h4" stroke="#446" fill="none"/></symbol>
  <symbol id="g-no" viewBox="0 0 16 16"><circle cx="8" cy="8" r="6.500" fill="#c6c8ca" stroke="#9a9da0" stroke-width="2"/><path d="M4 12l8-8" stroke="#9a9da0" stroke-width="2"/></symbol>
  <symbol id="rip" viewBox="0 0 16 16"><path d="M2 3l6-2 6 3v7l-5 4-7-3z" fill="#cdd3dc" stroke="#556"/><path d="M6 2l4-1-4 9-4-2z" fill="url(#orange)" stroke="#8a4400" stroke-width=".6"/><path d="M8 8l6-3M8 8v6" stroke="#556"/></symbol>

  <!-- surfaces toolbar -->
  <symbol id="s-ext" viewBox="0 0 16 16"><path d="M1 7q2-2 4 0l6-6q3 2 4 5l-7 9q-2-2-4-2z" fill="url(#orange)" stroke="#a85000"/><path d="M4 8l5 5M8 4l5 5" stroke="#a85000"/><path d="M13 0h3v3" stroke="#1a3ad0" stroke-width="1.500" fill="none"/></symbol>
  <symbol id="s-rev" viewBox="0 0 16 16"><path d="M0 15V9q8-10 16 0v6l-4-4H4z" fill="url(#orange)" stroke="#a85000"/><path d="M8 0v16" stroke="#000" stroke-dasharray="3 1"/></symbol>
  <symbol id="s-swp" viewBox="0 0 16 16"><path d="M15 1H7Q1 1 1 8t6 7h8v-5H8q-3 0-3-2t3-2h7z" fill="url(#orange)" stroke="#a85000"/></symbol>
  <symbol id="s-lof" viewBox="0 0 16 16"><path d="M5 1h6q-1 6 4 10l-4 1-3 3-3-3-4-1q5-4 4-10z" fill="url(#orange)" stroke="#a85000"/></symbol>
  <symbol id="s-bnd" viewBox="0 0 16 16"><path d="M1 9l4-5 4 1 3-4 3 4-4 7-4-1-2 3z" fill="url(#orange)" stroke="#a85000"/><path d="M5 4l6 8M2 10l11-5" stroke="#a85000"/></symbol>
  <symbol id="s-fil" viewBox="0 0 16 16"><path d="M1 8l7-6 7 5-7 7z" fill="url(#gold)" stroke="#8a5000"/><path d="M5 8l3-3 3 3-3 3z" fill="#fff6d0" stroke="#8a5000"/></symbol>
  <symbol id="s-pla" viewBox="0 0 16 16"><path d="M1 4l14-3v11L1 15z" fill="url(#orange)" stroke="#a85000"/></symbol>
  <symbol id="s-off" viewBox="0 0 16 16"><path d="M2 10q5 2 7-3h3l3 5q-7 5-13 1z" fill="url(#green)" stroke="#04621a"/><path d="M2 13q7 4 13 0v2q-7 2-13 0z" fill="#ffd020"/><path d="M3 8V1M1 4l2-3 2 3" stroke="#1a3ad0" stroke-width="1.500" fill="none"/></symbol>
  <symbol id="s-kni" viewBox="0 0 16 16"><path d="M.5 .5h9v9h-9zM3.500 3.500h9v9h-9z" fill="#ffe2a0" stroke="#a85000"/><path d="M6.500 6.500h9v9h-9z" fill="url(#orange)" stroke="#a85000"/></symbol>
  <symbol id="s-elb" viewBox="0 0 16 16"><path d="M10 1h5q1 13-14 14v-5q9-1 9-9z" fill="url(#orange)" stroke="#a85000"/><path d="M9 5l6 2M7 8l4 5M4 9l1 6" stroke="#a85000"/></symbol>
  <symbol id="s-del" viewBox="0 0 16 16"><ellipse cx="7" cy="6" rx="7" ry="4.500" transform="rotate(35 7 6)" fill="url(#gold)" stroke="#7a5200"/><circle cx="11" cy="11" r="4.500" fill="#333"/><path d="M9 9l4 4M13 9l-4 4" stroke="#fff" stroke-width="1.500"/></symbol>
  <symbol id="s-box" viewBox="0 0 16 16"><path d="M1 4l7-3 7 3v8l-7 3.500L1 12z" fill="url(#gold)" stroke="#7a5200"/><path d="M1 4l7 3 7-3M8 7v8" stroke="#7a5200" fill="none"/><path d="M4 2.500l7 3" stroke="#f07800" stroke-width="2"/></symbol>
  <symbol id="s-zip" viewBox="0 0 16 16"><path d="M1 1h4l3 5 3-5h4l-2 7 2 7H9V8H7v7H1l2-7z" fill="url(#gold)" stroke="#a87400"/><path d="M8 6v10" stroke="#a85000" stroke-dasharray="1 1" stroke-width="2"/></symbol>
  <symbol id="g-surf" viewBox="0 0 16 16"><path d="M1 8l4-4 4 1 3-3 3 4-4 6-4-1-2 2z" fill="url(#grey)" stroke="#9a9da0"/><path d="M5 4l6 8M9 9l5 5" stroke="#9a9da0"/></symbol>
  <symbol id="s-fla" viewBox="0 0 16 16"><path d="M2 4q3-4 6-1t6-1v5q-3 3-6 1T2 9z" fill="url(#gold)" stroke="#8a5000"/><path d="M1 15l3-4h8l4 4z" fill="url(#orange)" stroke="#a85000"/><path d="M4 7v5M2 10h4M11 7v5M9 10h4" stroke="#1a3ad0"/></symbol>
  <symbol id="tag" viewBox="0 0 16 16"><path d="M2 9l7-7 5-1 1 5-7 8-4 1-2-3z" fill="url(#gold)" stroke="#6a4400"/><circle cx="12" cy="4" r="1.200" fill="#fff" stroke="#6a4400"/><path d="M5 9l4 3M7 7l4 3" stroke="#6a4400" stroke-width=".8"/></symbol>

  <!-- task pane -->
  <symbol id="home" viewBox="0 0 16 16"><path d="M11 2h3v5h-3z" fill="#c02020"/><path d="M3 8h11v7H3z" fill="#ffe45a" stroke="#6a4a00"/><path d="M0 9l8-8 8 8-2 1-6-6-6 6z" fill="#ffd030" stroke="#6a4a00"/><path d="M7 10h3v5H7z" fill="#fff" stroke="#6a4a00"/></symbol>
  <symbol id="lib" viewBox="0 0 16 16"><path d="M0 8l4-2 2 1v8H4l-4-2z" fill="#1fae38" stroke="#053"/><path d="M6 5l4-1v11H6z" fill="#ffd83a" stroke="#6a4a00"/><path d="M11 2l4-1v14h-4z" fill="#6a9ae8" stroke="#1a3a80"/></symbol>
  <symbol id="ofold" viewBox="0 0 16 16"><path d="M1 13V3h5l1 2h6v3" fill="#fff0a0" stroke="#9a6a00"/><path d="M1 14l3-7h12l-3 7z" fill="url(#gold)" stroke="#9a6a00"/></symbol>
  <symbol id="views" viewBox="0 0 16 16"><path d="M.5 .5h15v10H.5z" fill="#fff" stroke="#334"/><path d="M2 2h5v2H2zM9 2h5v2H9zM2 6h5v2H2z" fill="#f0d020" stroke="#665" stroke-width=".6"/><path d="M9 6h5v3H9z" fill="#aac"/><path d="M1 13.500h6M5 11l3 2.500L5 16" stroke="#1a1ad0" stroke-width="1.600" fill="none"/></symbol>
  <symbol id="chat" viewBox="0 0 16 16"><path d="M0 1h12v9H5l-3 3v-3H0z" fill="#4a9ae8"/><path d="M5 5h11v8h-2v3l-3-3H5z" fill="#8cd030" stroke="#d6d9de" stroke-width=".6"/></symbol>

  <!-- windows taskbar -->
  <symbol id="win" viewBox="0 0 16 16"><path d="M0 2.300l6.700-.9v6.200H0zM7.500 1.300L16 0v7.600H7.500zM0 8.400h6.700v6.200L0 13.700zM7.500 8.400H16V16l-8.500-1.200z" fill="#fff"/></symbol>
  <symbol id="find" viewBox="0 0 16 16"><circle cx="10" cy="6" r="5.200" fill="none" stroke="#222" stroke-width="1.200"/><path d="M6.300 9.700L.5 15.500" stroke="#222" stroke-width="1.200"/></symbol>
  <symbol id="tview" viewBox="0 0 16 16"><path d="M1.500 4.500h9v7h-9zM1.500 0v2h9V0M1.500 16v-2h9v2M14.500 0v3M14.500 9v7" fill="none" stroke="#fff" stroke-width="1.200"/><path d="M13.500 4h2v3h-2z" fill="#fff"/></symbol>
  <symbol id="chrome" viewBox="0 0 24 24"><circle cx="12" cy="12" r="12" fill="#fbc116"/><path d="M12 12L1.600 6A12 12 0 0 1 22.400 6z" fill="#e33b2e"/><path d="M1.600 6A12 12 0 0 0 12 24l5.200-9-5.200-3z" fill="#2da94f"/><path d="M22.400 6H12v6l5.200 3L12 24A12 12 0 0 0 22.400 6z" fill="#fbc116"/><circle cx="12" cy="12" r="5.600" fill="#fff"/><circle cx="12" cy="12" r="4.400" fill="#1a73e8"/></symbol>
  <symbol id="pencils" viewBox="0 0 24 24"><path d="M1 5l5-4 17 17-5 5z" fill="#e8b81c"/><path d="M5 5l3-2M8 9l3-3M12 13l3-3M16 17l3-3" stroke="#7a5a00"/><path d="M2 23l2-6L18 2l4 4L8 20z" fill="#ffd83a" stroke="#a87c00"/><path d="M17 3l2-2q4 0 4 4l-2 2z" fill="#f6a8a0"/></symbol>
  <symbol id="wfold" viewBox="0 0 24 24"><path d="M5 2h11v15h3v5H5z" fill="#f0c860"/><path d="M5 2l5 3v19l-5-2z" fill="#ffe6a0"/></symbol>
  <symbol id="note" viewBox="0 0 24 24"><path d="M8 2h14l-2 20-4 1z" fill="#e4e8ea"/><path d="M7 2l13 1-6 18-13-2z" fill="url(#teal)" stroke="#cfe6ee"/></symbol>
  <symbol id="cloud" viewBox="0 0 24 24"><circle cx="17" cy="7" r="6" fill="#f06a3a"/><circle cx="21" cy="3" r="3" fill="#d02818"/><path d="M5 21q-5 0-5-4t5-4q1-6 7-6 5 0 6 5 6 0 6 5 0 4-5 4z" fill="#c8dcf8"/></symbol>
  <symbol id="adsk" viewBox="0 0 16 16"><path d="M6 2h3L5 14H1z" fill="#2a8ae0"/><path d="M9 2l6 12h-4L8 7z" fill="#30c090"/><path d="M11 8l3 6h-3z" fill="#e8c020"/></symbol>
  <symbol id="odrive" viewBox="0 0 16 16"><path d="M3 13q-3 0-3-3t3-3q1-4 5-4t5 4q3 0 3 3t-3 3z" fill="#1a86e0"/></symbol>
  <symbol id="gcirc" viewBox="0 0 16 16"><circle cx="8" cy="8" r="7.500" fill="#b8babd"/><path d="M11.500 6A4 4 0 1 0 12 9M12 4v3H9" fill="none" stroke="#fff" stroke-width="1.500"/></symbol>
  <symbol id="docs" viewBox="0 0 16 16"><path d="M5 1h6l3 3v10H5z" fill="none" stroke="#eee" stroke-width="1.400"/><path d="M2 15q-2-1-1-3t3-1q1-3 3-2t3 3q1 3-2 3z" fill="#1d1e22" stroke="#eee" stroke-width="1.200"/></symbol>
  <symbol id="shield" viewBox="0 0 16 16"><path d="M7 0l6 2v6q0 4-6 6-6-2-6-6V2z" fill="#fff"/><path d="M7 0v14M1 6h12" stroke="#1d1e22"/><circle cx="12" cy="12" r="4" fill="#18a058"/><path d="M10 12l1.500 1.500L14 11" stroke="#fff" fill="none"/></symbol>
  <symbol id="dots" viewBox="0 0 16 16"><circle cx="9" cy="8" r="6.500" fill="none" stroke="#5c9a30" stroke-width="1.600" stroke-dasharray="2 2"/><circle cx="3" cy="8" r="2" fill="#ddd"/></symbol>
  <symbol id="mute" viewBox="0 0 16 16"><path d="M1 6h3l4-4v12l-4-4H1zM10.500 6l4 4M14.500 6l-4 4" fill="none" stroke="#fff" stroke-width="1.200"/></symbol>
  <symbol id="notif" viewBox="0 0 16 16"><path d="M.6 1.600h14.800v11h-5L8 15.400l-2.400-2.800h-5z" fill="none" stroke="#fff" stroke-width="1.100"/></symbol>
</svg>

<header class="titlebar">
  <div class="logo">
    <svg class="ds" viewBox="0 0 22 22" aria-hidden="true"><path d="M9 1h6q2 2-3 5M3 9h6q3 3-1 8l-6 3L8 9M20 8q-6-1-6 2t4 4-2 5h-5" fill="none" stroke="#fff" stroke-width="1.500"/></svg>
    <span><b>SOLID</b>WORKS</span>
  </div>
  <button class="expand" title="Menu"></button>
  <div class="std">
    <button class="tb" title="New"><svg><use href="#new"/></svg></button><button class="drop" title="New options"></button>
    <button class="tb" title="Open"><svg><use href="#open"/></svg></button><button class="drop" title="Open options"></button>
    <button class="tb" title="Save"><svg><use href="#save"/></svg></button><button class="drop" title="Save options"></button>
    <button class="tb" title="Print"><svg><use href="#print"/></svg></button><button class="drop" title="Print options"></button>
    <button class="tb" title="Undo"><svg><use href="#undo"/></svg></button><button class="drop" title="Undo list"></button>
    <button class="tb on" title="Select"><svg><use href="#cursor"/></svg></button><button class="drop framed" title="Select options"></button>
    <button class="tb" title="Rebuild"><svg><use href="#traffic"/></svg></button>
    <button class="tb" title="File Properties"><svg><use href="#props"/></svg></button>
    <button class="tb" title="Options"><svg><use href="#list"/></svg></button><button class="drop" title="Options menu"></button>
    <button class="tb" title="Edit Appearance"><svg><use href="#ball"/></svg></button>
    <button class="tb" title="Apply Scene"><svg><use href="#scene"/></svg></button><button class="drop" title="Scenes"></button>
    <button class="tb" title="Close"><svg><use href="#cross"/></svg></button>
  </div>
  <h1>708839_ShelterBentPart_1a.SLDPRT *</h1>
  <div class="search">
    <svg class="icon"><use href="#term"/></svg>
    <input type="text" placeholder="Search Commands" aria-label="Search Commands">
    <button class="tb" title="Search"><svg><use href="#lens"/></svg></button><button class="drop" title="Search in"></button>
  </div>
  <div class="wincontrols">
    <button class="tb" title="Help"><svg><use href="#help"/></svg></button><button class="drop" title="Help menu"></button>
    <button class="tb" title="Minimize"><svg><use href="#min"/></svg></button>
    <button class="tb" title="Restore"><svg><use href="#restore"/></svg></button>
    <button class="tb" title="Close window"><svg><use href="#close"/></svg></button>
  </div>
</header>

<div class="toolbars">
  <div class="group">
    <button class="tb" title="Measure"><svg><use href="#tape"/></svg></button>
    <button class="tb" title="Mass Properties"><svg><use href="#scale"/></svg></button>
    <button class="tb" title="Center of Mass"><svg><use href="#cg"/></svg></button>
    <button class="tb" title="Spelling"><svg viewBox="0 0 16 16"><text x="0" y="6" font-family="Liberation Sans" font-size="7">ABC</text><path d="M3 10l4 4 6-7" fill="none" stroke="#4b6fe0" stroke-width="2"/></svg></button>
    <button class="tb" title="Design Table"><svg><use href="#xls"/></svg></button>
    <span class="sep"></span>
    <button class="tb on" title="View Origins"><svg><use href="#v-origin"/></svg></button>
    <button class="tb" title="View Planes"><svg><use href="#v-plane"/></svg></button>
    <button class="tb on" title="View Temporary Axes"><svg><use href="#v-temp"/></svg></button>
    <button class="tb" title="View Axes"><svg><use href="#v-axis"/></svg></button>
    <button class="tb on" title="View Sketches"><svg><use href="#v-sketch"/></svg></button>
    <button class="tb on" title="View Curves"><svg><use href="#v-curve"/></svg></button>
    <button class="tb" title="View Parting Lines"><svg><use href="#v-part"/></svg></button>
    <button class="tb" title="View Live Section"><svg><use href="#v-live"/></svg></button>
    <button class="tb on" title="View Center of Mass"><svg><use href="#v-cg"/></svg></button>
  </div>
  <div class="group">
    <button class="tb" title="Normal To"><svg><use href="#normal"/></svg></button>
    <span class="sep"></span>
    <button class="tb" title="Front"><svg><use href="#c-front"/></svg></button>
    <button class="tb" title="Back"><svg><use href="#c-back"/></svg></button>
    <button class="tb" title="Left"><svg><use href="#c-left"/></svg></button>
    <button class="tb" title="Right"><svg><use href="#c-right"/></svg></button>
    <button class="tb" title="Top"><svg><use href="#c-top"/></svg></button>
    <button class="tb" title="Bottom"><svg><use href="#c-bot"/></svg></button>
    <button class="tb" title="Isometric"><svg><use href="#c-iso"/></svg></button>
    <button class="tb" title="Trimetric"><svg><use href="#c-tri"/></svg></button>
    <button class="tb" title="Dimetric"><svg><use href="#c-tri"/></svg></button>
    <span class="sep"></span>
    <button class="tb" title="Perspective"><svg><use href="#persp"/></svg></button>
    <button class="tb" title="Zoom In/Out"><svg><use href="#zoomio"/></svg></button>
    <button class="tb" title="Pan"><svg><use href="#pan"/></svg></button>
    <button class="tb" title="View Selector"><svg><use href="#flash"/></svg></button>
    <button class="tb on" title="RealView"><svg><use href="#goldball"/></svg></button>
    <button class="tb" title="Shadows"><svg><use href="#greyball"/></svg></button>
    <button class="tb" title="Scene"><svg><use href="#scene"/></svg></button>
    <button class="tb" title="Render Options"><svg><use href="#greylist"/></svg></button>
    <button class="tb" title="Schedule Render"><svg><use href="#greyclock"/></svg></button>
  </div>
  <div class="group">
    <button class="tb" title="Load Style"><svg viewBox="0 0 16 16"><path d="M6.500 .5h9v7h-9z" fill="#fff" stroke="#222"/><text x="8" y="6" font-family="Liberation Serif" font-weight="bold" font-size="6">A°</text><path d="M1 5q0-4 4-3" stroke="#1a3ac0" stroke-width="1.500" fill="none"/><path d="M1 15V8h4l1 1h6l-2 6z" fill="url(#gold)" stroke="#b87c08"/></svg></button>
    <button class="tb" title="Add Style"><svg viewBox="0 0 16 16"><path d="M.5 4.500h11v11H.5z" fill="#dfe0e2" stroke="#8c8f92"/><text x="2" y="14" font-family="Liberation Serif" font-weight="bold" font-size="10" fill="#777">A</text><path d="M12 0v7M9 3.500h7M10 1l5 5M15 1l-5 5" stroke="#999" stroke-width=".8"/></svg></button>
    <button class="tb" title="Edit Style"><svg viewBox="0 0 16 16"><path d="M2.500 2.500h11v11h-11z" fill="#dfe0e2" stroke="#8c8f92" stroke-dasharray="2 1"/><text x="3" y="12" font-family="Liberation Serif" font-weight="bold" font-size="9" fill="#777">A°</text><path d="M0 0l3 3M16 0l-3 3M0 16l3-3M16 16l-3-3" stroke="#888"/></svg></button>
    <button class="tb" title="Save Style"><svg><use href="#an-save"/></svg></button>
  </div>
</div>

<main class="work">
  <div class="rails">
    <div class="rail">
      <button class="rb menu" title="Extruded Boss"><svg><use href="#extrude"/></svg></button>
      <button class="rb menu" title="Extruded Cut"><svg><use href="#cut"/></svg></button>
      <hr>
      <button class="rb menu" title="Fillet"><svg><use href="#fillet"/></svg></button>
      <button class="rb" title="Rib"><svg><use href="#rib"/></svg></button>
      <button class="rb" title="Shell"><svg><use href="#shell"/></svg></button>
      <button class="rb" title="Draft"><svg><use href="#draft"/></svg></button>
      <button class="rb" title="Dome"><svg><use href="#dome"/></svg></button>
      <button class="rb" title="Hole Wizard"><svg><use href="#hole-w"/></svg></button>
      <hr>
      <button class="rb" title="Circular Pattern"><svg><use href="#cpat"/></svg></button>
      <button class="rb" title="Linear Pattern"><svg><use href="#lpat"/></svg></button>
      <button class="rb" title="Move Body"><svg><use href="#move"/></svg></button>
      <button class="rb" title="Mirror"><svg><use href="#mirror"/></svg></button>
      <hr>
      <button class="rb" title="Plane"><svg><use href="#plane"/></svg></button>
      <button class="rb" title="Axis"><svg><use href="#axis"/></svg></button>
      <button class="rb" title="Split Line"><svg><use href="#split"/></svg></button>
      <button class="rb" title="Project Curve"><svg><use href="#proj"/></svg></button>
      <button class="rb" title="Composite Curve"><svg><use href="#comp"/></svg></button>
      <button class="rb" title="Curve Through XYZ Points"><svg><use href="#xyz"/></svg></button>
      <button class="rb" title="Curve Through Reference Points"><svg><use href="#thru"/></svg></button>
      <button class="rb" title="Helix"><svg><use href="#helix"/></svg></button>
    </div>
    <div class="rail">
      <button class="rb menu" title="Sketch"><svg><use href="#sketch"/></svg></button>
      <button class="rb menu" title="Smart Dimension"><svg><use href="#dim"/></svg></button>
      <button class="rb" title="Add Relation" disabled><svg><use href="#rel"/></svg></button>
      <hr>
      <button class="rb menu" title="Line"><svg><use href="#line"/></svg></button>
      <button class="rb menu" title="Rectangle"><svg><use href="#rect"/></svg></button>
      <button class="rb menu" title="Slot"><svg><use href="#slot"/></svg></button>
      <button class="rb menu" title="Circle"><svg><use href="#circ"/></svg></button>
      <button class="rb menu" title="Arc"><svg><use href="#arc"/></svg></button>
      <button class="rb menu" title="Spline"><svg><use href="#spline"/></svg></button>
      <button class="rb menu" title="Ellipse"><svg><use href="#ell"/></svg></button>
      <button class="rb menu" title="Sketch Fillet" disabled><svg><use href="#sfil"/></svg></button>
      <button class="rb" title="Polygon"><svg><use href="#poly"/></svg></button>
      <button class="rb" title="Point"><svg><use href="#pt"/></svg></button>
      <button class="rb" title="Plane"><svg><use href="#splane"/></svg></button>
      <button class="rb" title="Text"><svg><use href="#stext"/></svg></button>
      <hr>
      <button class="rb menu" title="Trim" disabled><svg><use href="#trim"/></svg></button>
      <button class="rb menu" title="Convert Entities"><svg><use href="#conv"/></svg></button>
      <button class="rb" title="Offset" disabled><svg><use href="#off"/></svg></button>
      <button class="rb" title="Mirror Entities" disabled><svg><use href="#smir"/></svg></button>
      <button class="rb menu" title="Linear Sketch Pattern" disabled><svg><use href="#slin"/></svg></button>
      <button class="rb menu" title="Move Entities" disabled><svg><use href="#smove"/></svg></button>
      <button class="rb" title="Repair Sketch" disabled><svg><use href="#pin"/></svg></button>
      <button class="rb" title="Mesh"><svg><use href="#bgrid"/></svg></button>
      <button class="rb" title="Equation Driven Curve"><svg><use href="#ssig"/></svg></button>
      <button class="rb" title="Rapid Sketch"><svg><use href="#spen"/></svg></button>
    </div>
  </div>

  <div class="doc">
    <div class="split">
      <aside class="panel">
        <div class="ptabs">
          <button class="ptab active" title="FeatureManager"><svg><use href="#part"/></svg></button>
          <button class="ptab" title="PropertyManager"><svg><use href="#props"/></svg></button>
          <button class="ptab" title="ConfigurationManager"><svg><use href="#config"/></svg></button>
          <button class="ptab" title="DimXpertManager"><svg><use href="#dimx"/></svg></button>
          <button class="ptab" title="DisplayManager"><svg><use href="#sphere"/></svg></button>
          <button class="more" title="More tabs"><svg viewBox="0 0 10 10"><path d="M1 1l4 4-4 4M5 1l4 4-4 4" fill="none" stroke="#222" stroke-width="1.400"/></svg></button>
        </div>
        <div class="filter"><svg class="icon"><use href="#funnel"/></svg><input type="text" aria-label="Filter"></div>
        <div class="tree">
          <div class="node root"><svg><use href="#part"/></svg><svg><use href="#cap"/></svg><span>708839_ShelterBentPart_1a&nbsp; (De</span></div>
          <ul>
            <li><div class="node"><button class="tg" title="Expand"></button><svg><use href="#t-hist"/></svg><span>History</span></div></li>
            <li><div class="node"><svg><use href="#t-sens"/></svg><span>Sensors</span></div></li>
            <li><div class="node"><button class="tg" title="Expand"></button><svg viewBox="0 0 16 16"><use href="#fold" width="16" height="16"/><text x="4" y="13" font-family="Liberation Serif" font-weight="bold" font-size="12" fill="#1a2ad0">A</text></svg><span>Annotations</span></div></li>
            <li><div class="node"><button class="tg" title="Expand"></button><svg><use href="#t-cut"/></svg><span>Cut list(1)</span></div></li>
            <li><div class="node"><button class="tg" title="Expand"></button><svg viewBox="0 0 16 16"><use href="#fold" width="16" height="16"/><text x="5" y="13" font-family="Liberation Serif" font-weight="bold" font-size="11" fill="#1a2ad0">Σ</text></svg><span>Equations</span></div></li>
            <li><div class="node"><svg><use href="#t-ps"/></svg><span>PS HI</span></div></li>
            <li><div class="node"><svg><use href="#plane"/></svg><span>Front Plane</span></div></li>
            <li><div class="node"><svg><use href="#plane"/></svg><span>Top Plane</span></div></li>
            <li><div class="node"><svg><use href="#plane"/></svg><span>Right Plane</span></div></li>
            <li><div class="node"><svg><use href="#t-orig"/></svg><span>Origin</span></div></li>
            <li><div class="node"><svg><use href="#t-rout"/></svg><span>Router</span></div></li>
            <li><div class="node"><button class="tg" title="Expand"></button><svg><use href="#t-sm"/></svg><span>Sheet-Metal</span></div></li>
            <li><div class="node"><button class="tg" title="Expand"></button><svg><use href="#t-base"/></svg><span>Base-Flange2</span></div></li>
            <li><div class="node"><button class="tg" title="Expand"></button><svg><use href="#t-edge"/></svg><span>Edge-Flange1</span></div></li>
            <li><div class="node"><button class="tg" title="Expand"></button><svg><use href="#t-edge"/></svg><span>Edge-Flange2</span></div></li>
            <li><div class="node"><button class="tg" title="Expand"></button><svg><use href="#t-ext"/></svg><span>Cut-Extrude1</span></div></li>
            <li><div class="node"><button class="tg open" title="Collapse"></button><svg><use href="#t-ext"/></svg><span>Cut-Extrude2</span></div>
              <ul><li><div class="node"><svg><use href="#t-sk"/></svg><span>Sketch50</span></div></li></ul></li>
            <li><div class="node"><button class="tg open" title="Collapse"></button><svg><use href="#t-ext"/></svg><span>Cut-Extrude3</span></div>
              <ul><li><div class="node"><svg><use href="#t-sk"/></svg><span>Sketch51</span></div></li></ul></li>
            <li><div class="node"><button class="tg" title="Expand"></button><svg><use href="#t-ext"/></svg><span>Cut-Extrude4</span></div></li>
            <li><div class="node"><button class="tg open" title="Collapse"></button><svg><use href="#t-fp"/></svg><span>Flat-Pattern</span></div>
              <ul><li><div class="node"><button class="tg" title="Expand"></button><svg><use href="#t-flat"/></svg><span>Flat-Pattern23</span></div></li></ul></li>
          </ul>
          <div class="rollback"></div>
        </div>
        <div class="hscroll">
          <button title="Scroll left"><svg viewBox="0 0 8 8"><path d="M6 0L2 4l4 4" fill="none" stroke="#444" stroke-width="1.800"/></svg></button>
          <div class="track"><div class="thumb"></div></div>
          <button title="Scroll right"><svg viewBox="0 0 8 8"><path d="M2 0l4 4-4 4" fill="none" stroke="#444" stroke-width="1.800"/></svg></button>
        </div>
      </aside>

      <section class="viewport">
        <svg class="model" viewBox="290 58 1308 738" role="img" aria-label="Flat pattern">
          <defs>
            <filter id="soft" x="-20%" y="-20%" width="140%" height="140%"><feGaussianBlur stdDeviation="15"/></filter>
            <filter id="wide" x="-30%" y="-30%" width="160%" height="160%"><feGaussianBlur stdDeviation="34"/></filter>
            <path id="outline" d="M716 196L833 234L900 288L936 216L1025 139L1046 247L1029 325L1118 317L1238 347L1142 417L1057 441L1111 506L1142 613L1026 574L958 520L922 594L834 671L811 562L830 484L741 493L620 463L715 392L801 368L747 303z"/>
          </defs>
          <use href="#outline" filter="url(#wide)" opacity=".1"/>
          <use href="#outline" filter="url(#soft)" opacity=".8"/>
          <use href="#outline" fill="#fff" stroke="#000" stroke-width="1.200"/>
          <g fill="url(#hole)" stroke="#000" stroke-width="1.300">
            <path d="M967 235L1009 247L996 285L953 273z"/>
            <path d="M735 424L780 415L789 454L745 462z"/>
            <path d="M878 499L911 508L888 574L855 565z"/>
            <path d="M1046 490L1076 520L1044 546L1014 516z"/>
          </g>
          <g fill="none" stroke="#808080" stroke-dasharray="14 4 4 4">
            <path d="M561 225L1179 109L1298 585L679 700z"/>
            <path d="M833 234L747 303M900 288L801 368M936 216L1046 247M900 288L1029 325M1118 317L1142 417M1029 325L1057 441M1057 441L958 520M1111 506L1026 574M958 520L830 484M922 594L811 562M830 484L801 368M741 493L715 392"/>
          </g>
          <g fill="#757575">
            <circle cx="561" cy="225" r="2.500"/><circle cx="1179" cy="109" r="2.500"/><circle cx="1298" cy="585" r="2.500"/><circle cx="679" cy="700" r="2.500"/>
            <circle cx="833" cy="234" r="2.500"/><circle cx="900" cy="288" r="2.500"/><circle cx="936" cy="216" r="2.500"/><circle cx="1046" cy="247" r="2.500"/>
            <circle cx="1029" cy="325" r="2.500"/><circle cx="1118" cy="317" r="2.500"/><circle cx="1142" cy="417" r="2.500"/><circle cx="1057" cy="441" r="2.500"/>
            <circle cx="1111" cy="506" r="2.500"/><circle cx="1026" cy="574" r="2.500"/><circle cx="958" cy="520" r="2.500"/><circle cx="922" cy="594" r="2.500"/>
            <circle cx="811" cy="562" r="2.500"/><circle cx="830" cy="484" r="2.500"/><circle cx="741" cy="493" r="2.500"/><circle cx="715" cy="392" r="2.500"/>
            <circle cx="801" cy="368" r="2.500"/><circle cx="747" cy="303" r="2.500"/>
          </g>
          <g stroke="#00f" fill="#00f"><path d="M929.500 404V393M930 404l8 2.500M926 401l7 7M933 401l-7 7M925 404.500h9" fill="none"/><path d="M929.500 390l-3 5h6zM945 409l-8-5-1 6z" stroke="none"/></g>
        </svg>

        <div class="hud">
          <button class="tb" title="Zoom to Fit"><svg><use href="#zfit"/></svg></button>
          <button class="tb" title="Zoom to Area"><svg><use href="#zarea"/></svg></button>
          <button class="tb" title="Previous View"><svg><use href="#prev"/></svg></button>
          <button class="tb" title="Section View"><svg><use href="#section"/></svg></button>
          <button class="tb" title="View Orientation"><svg><use href="#vorient"/></svg></button><button class="drop" title="Orientations"></button>
          <button class="tb" title="Display Style"><svg><use href="#dstyle"/></svg></button><button class="drop" title="Styles"></button>
          <button class="tb" title="Hide/Show Items"><svg><use href="#specs"/></svg></button><button class="drop" title="Items"></button>
          <button class="tb" title="Edit Appearance"><svg><use href="#sphere"/></svg></button>
          <button class="tb" title="Apply Scene"><svg><use href="#scene"/></svg></button><button class="drop" title="Scenes"></button>
          <button class="tb" title="View Settings"><svg><use href="#monitor"/></svg></button><button class="drop" title="Settings"></button>
        </div>
        <div class="doccontrols">
          <button class="tb" title="Left pane"><svg><use href="#paneL"/></svg></button>
          <button class="tb" title="Right pane"><svg><use href="#paneR"/></svg></button>
          <button class="tb" title="Minimize document"><svg><use href="#min"/></svg></button>
          <button class="tb" title="Restore document"><svg><use href="#restore"/></svg></button>
          <button class="tb" title="Close document"><svg><use href="#close"/></svg></button>
        </div>
        <svg class="ghost" viewBox="0 0 56 48" aria-hidden="true">
          <path d="M1 1h31l8 18v9H8L1 13z" fill="#eceef0" stroke="#c4c7cb"/><path d="M1 1l7 17h32M8 18v10" fill="none" stroke="#c4c7cb"/>
          <path d="M14 1h7l7 17v10h-6V18z" fill="#fde3cf" stroke="#f5cba8"/>
          <path d="M46 23q9 1 8 9-1 7-8 8v6l-8-8 8-7v4q4-1 4-5t-4-7z" fill="#e6d4ee" stroke="#c8a8d8"/>
        </svg>
        <svg class="triad" viewBox="0 0 54 58" aria-hidden="true">
          <path d="M16 26V10" stroke="#0a7a1a" stroke-width="2"/><circle cx="16" cy="12" r="4" fill="#0a6a1a"/><path d="M16 26l22 6" stroke="#c01010" stroke-width="2"/><path d="M46 34l-11-6-1 6z" fill="#d01818" stroke="#700"/>
          <path d="M16 26L9 44" stroke="#1a1ad0" stroke-width="3"/><path d="M6 50l0-11 7 3z" fill="#1a1ad0"/><circle cx="16" cy="26" r="2" fill="#336"/>
          <text x="13" y="8" fill="#0a8a1a">Y</text><text x="44" y="37" fill="#f00">X</text><text x="1" y="57" fill="#00f">Z</text>
        </svg>
        <button class="handle" title="Collapse panel"><i></i><i></i><i></i></button>
        <nav class="taskpane">
          <button class="active" title="Resources"><svg><use href="#home"/></svg></button>
          <button title="Design Library"><svg><use href="#lib"/></svg></button>
          <button title="File Explorer"><svg><use href="#ofold"/></svg></button>
          <button title="View Palette"><svg><use href="#views"/></svg></button>
          <button title="Appearances"><svg><use href="#sphere"/></svg></button>
          <button title="Custom Properties"><svg><use href="#props"/></svg></button>
          <button title="Forum"><svg><use href="#chat"/></svg></button>
        </nav>
      </section>
    </div>

    <div class="doctabs">
      <div class="nav">
        <button title="First"><svg viewBox="0 0 10 10"><path d="M2 1v8" stroke="#85878a" stroke-width="1.500"/><path d="M8 1v8L3 5z" fill="#85878a"/></svg></button>
        <button title="Previous"><svg viewBox="0 0 10 10"><path d="M7 1v8L2 5z" fill="#85878a"/></svg></button>
        <button title="Next"><svg viewBox="0 0 10 10"><path d="M3 1v8l5-4z" fill="#85878a"/></svg></button>
        <button title="Last"><svg viewBox="0 0 10 10"><path d="M8 1v8" stroke="#85878a" stroke-width="1.500"/><path d="M2 1v8l5-4z" fill="#85878a"/></svg></button>
      </div>
      <button class="dtab active">Model</button>
      <button class="dtab">3D Views</button>
      <button class="dtab last">Motion Study 1</button>
    </div>
  </div>
</main>

<div class="toolbars bottom">
  <div class="group">
    <button class="tb" title="Base Flange" disabled><svg><use href="#g-base"/></svg></button>
    <button class="tb" title="Convert to Sheet Metal" disabled><svg><use href="#g-box"/></svg></button>
    <button class="tb" title="Lofted Bend" disabled><svg><use href="#g-loft"/></svg></button>
    <button class="tb" title="Insert Bends"><svg><use href="#g-bend"/></svg></button>
    <span class="sep"></span>
    <button class="tb" title="Edge Flange" disabled><svg><use href="#g-edge"/></svg></button>
    <button class="tb" title="Miter Flange" disabled><svg><use href="#g-miter"/></svg></button>
    <button class="tb" title="Swept Flange" disabled><svg><use href="#g-box"/></svg></button>
    <button class="tb" title="Closed Corner" disabled><svg><use href="#g-tabs"/></svg></button>
    <button class="tb" title="Welded Corner" disabled><svg><use href="#g-gears"/></svg></button>
    <button class="tb" title="Break Corner" disabled><svg><use href="#g-corner"/></svg></button>
    <button class="tb" title="Gusset" disabled><svg><use href="#g-edge"/></svg></button>
    <button class="tb" title="Hem" disabled><svg><use href="#g-hem"/></svg></button>
    <button class="tb" title="Jog" disabled><svg><use href="#g-jog"/></svg></button>
    <button class="tb" title="Sketched Bend" disabled><svg><use href="#g-base"/></svg></button>
    <button class="tb" title="Cross Break" disabled><svg><use href="#g-punch"/></svg></button>
    <button class="tb" title="Forming Tool"><svg><use href="#form"/></svg></button>
    <button class="tb" title="Corner Relief" disabled><svg><use href="#g-swept"/></svg></button>
    <span class="sep"></span>
    <button class="tb" title="Extruded Cut"><svg><use href="#cut"/></svg></button>
    <button class="tb" title="Simple Hole"><svg><use href="#cut2"/></svg></button>
    <button class="tb" title="Vent"><svg><use href="#vent"/></svg></button>
    <span class="sep"></span>
    <button class="tb" title="Unfold" disabled><svg><use href="#g-unf"/></svg></button>
    <button class="tb" title="Fold" disabled><svg><use href="#g-fold"/></svg></button>
    <button class="tb on" title="Flatten"><svg><use href="#flat"/></svg></button>
    <button class="tb" title="No Bends" disabled><svg><use href="#g-no"/></svg></button>
    <span class="sep"></span>
    <button class="tb" title="Rip" disabled><svg><use href="#g-base"/></svg></button>
    <button class="tb" title="Insert Rip"><svg><use href="#rip"/></svg></button>
    <span class="sep"></span>
  </div>
  <div class="group">
    <button class="tb" title="Extruded Surface"><svg><use href="#s-ext"/></svg></button>
    <button class="tb" title="Revolved Surface"><svg><use href="#s-rev"/></svg></button>
    <button class="tb" title="Swept Surface"><svg><use href="#s-swp"/></svg></button>
    <button class="tb" title="Lofted Surface"><svg><use href="#s-lof"/></svg></button>
    <button class="tb" title="Boundary Surface"><svg><use href="#s-bnd"/></svg></button>
    <button class="tb" title="Filled Surface"><svg><use href="#s-fil"/></svg></button>
    <button class="tb" title="Planar Surface"><svg><use href="#s-pla"/></svg></button>
    <button class="tb" title="Freeform"><svg><use href="#s-off"/></svg></button>
    <button class="tb" title="Offset Surface"><svg><use href="#s-kni"/></svg></button>
    <button class="tb" title="Ruled Surface"><svg><use href="#s-elb"/></svg></button>
    <button class="tb" title="Delete Face"><svg><use href="#s-del"/></svg></button>
    <button class="tb" title="Replace Face"><svg><use href="#s-box"/></svg></button>
    <button class="tb" title="Knit Surface"><svg><use href="#s-zip"/></svg></button>
    <span class="sep"></span>
    <button class="tb" title="Extend Surface" disabled><svg><use href="#g-surf"/></svg></button>
    <button class="tb" title="Trim Surface" disabled><svg><use href="#g-surf"/></svg></button>
    <button class="tb" title="Untrim Surface" disabled><svg><use href="#g-surf"/></svg></button>
    <button class="tb" title="Surface Flatten"><svg><use href="#s-fla"/></svg></button>
  </div>
  <div class="group">
    <button class="tb" title="Split Line"><svg><use href="#split"/></svg></button>
    <button class="tb" title="Project Curve"><svg><use href="#proj"/></svg></button>
    <button class="tb" title="Composite Curve"><svg><use href="#comp"/></svg></button>
    <button class="tb" title="Curve Through XYZ"><svg><use href="#xyz"/></svg></button>
    <button class="tb" title="Curve Through Points"><svg><use href="#thru"/></svg></button>
    <button class="tb" title="Helix"><svg><use href="#helix"/></svg></button>
  </div>
</div>

<div class="status">
  <span class="msg">SOLIDWORKS Education Edition - Instructional Use Only</span>
  <span class="mode">Editing Part</span>
  <span class="units">MMGS</span>
  <button class="up" title="Units"></button>
  <button class="q" title="Quick Tips">?</button>
  <button class="tagbtn" title="Tags"><svg class="icon"><use href="#tag"/></svg></button>
</div>

<footer class="taskbar">
  <button class="start" title="Start"><svg><use href="#win"/></svg></button>
  <label class="find"><svg><use href="#find"/></svg><input type="text" placeholder="Type here to search" aria-label="Type here to search"></label>
  <button class="tview" title="Task View"><svg><use href="#tview"/></svg></button>
  <div class="apps">
    <button class="app"><svg><use href="#chrome"/></svg>Bent Part Prelimina...</button>
    <button class="app bare" title="Pencils"><svg><use href="#pencils"/></svg></button>
    <button class="app current"><svg viewBox="0 0 24 24"><path d="M1 4l11-4 11 3-2 13H2z" fill="#e02020"/><path d="M1 4l11 3 11-4-11-3z" fill="#ff6a60"/><path d="M12 7v10" stroke="#8a0808"/><text x="2" y="15" font-family="Liberation Sans" font-weight="bold" font-size="10" fill="#fff">SW</text><text x="5" y="23" font-family="Liberation Sans" font-weight="bold" font-size="7" fill="#fff">2015</text></svg>SOLIDWORKS Educ...</button>
    <button class="app"><svg><use href="#wfold"/></svg>Shelter</button>
    <button class="app"><svg><use href="#note"/></svg>708839_ShelterBent...</button>
  </div>
  <div class="tray">
    <button class="weather"><svg><use href="#cloud"/></svg>15°C</button>
    <button class="ti" title="SOLIDWORKS"><svg viewBox="0 0 16 16"><path d="M1 2l6-2 6 2-1 7-6 1-4-2z" fill="#e02828"/><text x="2" y="8" font-family="Liberation Sans" font-weight="bold" font-size="6" fill="#fff">SW</text><path d="M5 11l4 4 6-8" fill="none" stroke="#28d028" stroke-width="2.400"/></svg></button>
    <button class="ti" title="Autodesk"><svg><use href="#adsk"/></svg></button>
    <button class="ti" title="OneDrive"><svg><use href="#odrive"/></svg></button>
    <button class="ti" title="Sync"><svg><use href="#gcirc"/></svg></button>
    <button class="ti" title="Files"><svg><use href="#docs"/></svg></button>
    <button class="ti" title="Security"><svg><use href="#shield"/></svg></button>
    <button class="ti" title="Status"><svg><use href="#dots"/></svg></button>
    <button class="ti" title="Volume"><svg><use href="#mute"/></svg></button>
    <button class="lang">ENG</button>
    <button class="clock"><span>9:40 AM</span><span>10/12/2022</span></button>
    <button class="notif" title="Notifications"><svg><use href="#notif"/></svg></button>
  </div>
</footer>

</body>
</html>
```
FILE: styles.css
```css
* {
  box-sizing: border-box;
}

body {
  margin: 0;
  height: 100vh;
  display: flex;
  flex-direction: column;
  overflow: hidden;
  background: #d6d9de;
  color: #000;
  font-family: Lato, "Open Sans", sans-serif;
  font-size: 12px;
  line-height: 18px;
}

button {
  margin: 0;
  padding: 0;
  border: 0;
  background: none;
  color: inherit;
  font: inherit;
  flex: none;
  display: flex;
  align-items: center;
  justify-content: center;
  white-space: nowrap;
}

input {
  border: 0;
  padding: 0;
  background: none;
  font: inherit;
  min-width: 0;
  flex: 1;
  outline: none;
}

.sprite {
  position: absolute;
}

.icon,
.tb svg,
.rb svg,
.ptab svg,
.node svg,
.taskpane svg {
  width: 16px;
  height: 16px;
  flex: none;
}

/* toolbar buttons */
.tb {
  width: 23px;
  height: 23px;
}

.tb svg {
  width: 17px;
  height: 17px;
}

.tb.on {
  background: #b4b7bb;
  border: 1px solid #63676b;
}

.drop {
  width: 13px;
  height: 23px;
}

.drop::before,
.rb.menu::after {
  content: "";
  border: 3px solid transparent;
  border-top: 4px solid #44474b;
  border-bottom: 0;
}

.drop.framed {
  border: 1px solid #8a8d91;
  border-left: 0;
}

/* title bar */
.titlebar {
  height: 30px;
  flex: none;
  display: flex;
  align-items: center;
  border-top: 1px solid #f4f4f4;
  border-bottom: 1px solid #111;
}

.logo {
  width: 131px;
  height: 28px;
  padding-left: 4px;
  display: flex;
  align-items: center;
  gap: 4px;
  border-left: 5px solid #da291c;
  background: linear-gradient(#4c5861, #20272d);
  color: #fff;
  font-family: "Noto Sans", sans-serif;
  font-size: 13px;
  font-style: italic;
}

.ds {
  width: 21px;
  height: 21px;
}

.expand {
  width: 10px;
  height: 28px;
  background: #8b8d90;
}

.expand::before {
  content: "";
  border: 4px solid transparent;
  border-left: 5px solid #222;
  border-right: 0;
}

.std {
  display: flex;
  margin-left: 28px;
}

.titlebar h1 {
  flex: 1;
  margin: 0;
  font-size: 12px;
  font-weight: normal;
  text-align: center;
  color: #222;
}

.search {
  width: 202px;
  height: 23px;
  padding-left: 4px;
  display: flex;
  align-items: center;
  gap: 5px;
  border: 1px solid #111;
  background: #eceef2;
}

.search .drop {
  margin-left: -5px;
}

.search input::placeholder {
  color: #66696e;
}

.wincontrols {
  display: flex;
  margin-left: 3px;
}

/* toolbar rows */
.toolbars {
  height: 28px;
  flex: none;
  display: flex;
  border-top: 1px solid #fff;
}

.toolbars.bottom {
  height: 29px;
  border-bottom: 1px solid #9a9da0;
}

.group {
  display: flex;
  align-items: center;
  padding-right: 7px;
  border-right: 1px solid #8e9194;
  box-shadow: 1px 0 #fff;
}

.group::before {
  content: "";
  width: 2px;
  height: 22px;
  margin: 0 6px 0 4px;
  background: repeating-linear-gradient(#555 0 2px, transparent 2px 4px);
}

.group + .group::before {
  margin-left: 5px;
}

.sep {
  width: 1px;
  height: 20px;
  margin: 0 4px 0 3px;
  background: #85888c;
}

/* work area */
.work {
  flex: 1;
  min-height: 0;
  display: flex;
}

.rails {
  display: flex;
  align-items: flex-start;
  flex: none;
  width: 89px;
  margin-bottom: 1px;
  border-bottom: 1px solid #8e9194;
}

.rail {
  width: 45px;
  padding: 15px 0 6px;
  position: relative;
  border-bottom: 1px solid #8e9194;
  border-right: 1px solid #8e9194;
  box-shadow: 1px 1px #fff;
}

.rail + .rail {
  width: 44px;
  padding-left: 1px;
  border-right: 0;
}

.rail::before {
  content: "";
  position: absolute;
  top: 6px;
  left: 4px;
  right: 3px;
  height: 2px;
  background: repeating-linear-gradient(90deg, #555 0 2px, transparent 2px 4px);
}

.rail hr {
  width: 36px;
  height: 1px;
  margin: 3px 0 4px 5px;
  border: 0;
  background: #85888c;
}

.rb {
  width: 40px;
  height: 23px;
  padding-left: 6px;
  justify-content: flex-start;
  gap: 9px;
}

.rb:disabled::after {
  opacity: .5;
}

.doc {
  flex: 1;
  min-width: 0;
  display: flex;
  flex-direction: column;
}

.split {
  flex: 1;
  min-height: 0;
  display: flex;
}

/* feature manager */
.panel {
  width: 201px;
  flex: none;
  display: flex;
  flex-direction: column;
  background: #e3e6eb;
  border-right: 2px solid #111;
  border-top: 2px solid #6c7090;
  border-bottom: 3px solid #8a95b5;
}

.ptabs {
  display: flex;
  padding-top: 4px;
  background: #d6d9de;
}

.ptab {
  width: 28px;
  height: 23px;
  background: #a8aaad;
  border: 2px solid #111;
  border-left-width: 1px;
  border-right-width: 1px;
}

.ptab.active {
  background: #e3e6eb;
  border-bottom-color: #e3e6eb;
}

.ptabs .more {
  margin-left: auto;
  width: 18px;
}

.more svg {
  width: 9px;
  height: 9px;
}

.filter {
  display: flex;
  align-items: center;
  height: 18px;
  margin: 1px 1px 4px;
  padding-left: 5px;
  background: #f0f0f0;
  border: 1px solid #444;
}

.filter svg {
  width: 14px;
  height: 14px;
}

.tree {
  flex: 1;
  overflow: hidden;
}

.tree ul {
  list-style: none;
  margin: 0;
  padding: 0 0 0 10px;
}

.tree ul ul {
  padding-left: 18px;
}

.tree li {
  border-left: 1px dotted #777;
}

.tree li:last-child {
  border-left-color: transparent;
}

.node {
  display: flex;
  align-items: center;
  height: 18px;
  white-space: nowrap;
}

.node::before {
  content: "";
  width: 10px;
  border-top: 1px dotted #777;
}

.node.root::before {
  display: none;
}

.node.root {
  gap: 3px;
  padding-left: 2px;
  font-size: 11px;
}

.node:not(.root) svg {
  margin-right: 5px;
}

.tg {
  width: 9px;
  height: 9px;
  margin: 0 6px 0 -15px;
  border: 1px solid #777;
  background:
    linear-gradient(#1a3a80, #1a3a80) center / 5px 1px no-repeat,
    linear-gradient(#1a3a80, #1a3a80) center / 1px 5px no-repeat,
    #fff;
}

.tg.open {
  background: linear-gradient(#1a3a80, #1a3a80) center / 5px 1px no-repeat, #fff;
}

.rollback {
  height: 3px;
  background: #0078ff;
  border-bottom: 1px solid #335;
}

.hscroll {
  display: flex;
  height: 17px;
  background: #f0f0f0;
  border-top: 1px solid #fff;
}

.hscroll button {
  width: 16px;
}

.hscroll svg {
  width: 8px;
  height: 8px;
}

.track {
  flex: 1;
}

.thumb {
  width: 49%;
  height: 100%;
  background: #cdcdcd;
}

/* graphics area */
.viewport {
  flex: 1;
  min-width: 0;
  position: relative;
  background: #fff;
  border-right: 1px solid #5a6670;
}

.model {
  display: block;
  width: 100%;
  height: 100%;
}

.hud,
.doccontrols {
  position: absolute;
  top: 3px;
  display: flex;
  opacity: .8;
}

.hud {
  left: 503px;
}

.hud .drop {
  width: 14px;
}

.hud .drop::before {
  opacity: .7;
}

.doccontrols {
  right: 6px;
}

.ghost {
  position: absolute;
  top: 40px;
  right: 47px;
  width: 56px;
  height: 48px;
}

.triad {
  position: absolute;
  left: 25px;
  bottom: 24px;
  width: 54px;
  height: 58px;
  font-size: 10px;
}

.handle {
  position: absolute;
  left: -2px;
  top: 350px;
  width: 9px;
  height: 39px;
  flex-direction: column;
  gap: 1px;
  background: #e3e6eb;
  border: 1px solid #111;
  border-left: 0;
}

.handle i {
  border: 4px solid transparent;
  border-right: 4px solid #222;
  border-left: 0;
}

.taskpane {
  position: absolute;
  top: 60px;
  right: -1px;
  border-bottom: 1px solid #111;
}

.taskpane button {
  width: 24px;
  height: 24px;
  background: #a8aaad;
  border: 1px solid #111;
  border-right: 0;
  box-shadow: inset 1px 1px #e8e8e8;
}

.taskpane .active {
  background: #e3e6eb;
}

/* document tabs */
.doctabs {
  height: 15px;
  flex: none;
  display: flex;
  align-items: flex-start;
  padding-left: 28px;
  background: #e3e6eb;
  border-top: 1px solid #111;
}

.nav {
  display: flex;
}

.nav button {
  width: 16px;
  height: 14px;
  background: #a8aaad;
  border: 1px solid #909295;
}

.nav svg {
  width: 10px;
  height: 10px;
}

.dtab {
  min-width: 67px;
  height: 13px;
  padding: 0 8px;
  line-height: 12px;
  background: #a8aaad;
  border: 1px solid #111;
  border-top: 0;
  border-left: 0;
}

.dtab.active {
  min-width: 58px;
  background: #e3e6eb;
  border-left: 1px solid #111;
  font-weight: bold;
}

.dtab.last {
  min-width: 105px;
  padding-right: 16px;
}

/* status bar */
.status {
  height: 20px;
  flex: none;
  display: flex;
  align-items: center;
  padding: 0 6px 0 2px;
  border-top: 1px solid #111;
}

.mode {
  margin-left: auto;
}

.units {
  margin-left: 53px;
}

.up {
  margin-left: 17px;
  border: 3px solid transparent;
  border-bottom: 4px solid #333;
  border-top: 0;
}

.q {
  width: 14px;
  height: 14px;
  margin-left: 17px;
  background: #eaf2ea;
  border: 1px solid #2a5a98;
  color: #0a9a1a;
  font-weight: bold;
  line-height: 12px;
}

.tagbtn {
  margin-left: 57px;
}

/* taskbar */
.taskbar {
  height: 40px;
  flex: none;
  display: flex;
  background: #1c1d22;
  color: #fff;
}

.start {
  width: 48px;
}

.start svg {
  width: 16px;
  height: 16px;
}

.find {
  width: 344px;
  padding-left: 13px;
  display: flex;
  align-items: center;
  gap: 10px;
  background: #f2f2f2;
  border: 1px solid #bbb;
  font-size: 15px;
}

.find svg {
  width: 16px;
  height: 16px;
}

.find input::placeholder {
  color: #333;
}

.tview {
  width: 49px;
}

.tview svg {
  width: 17px;
  height: 17px;
}

.apps {
  display: flex;
  gap: 6px;
  margin-left: 6px;
}

.app {
  width: 152px;
  padding-left: 6px;
  gap: 4px;
  justify-content: flex-start;
  border-bottom: 2px solid #76b9ed;
}

.app svg {
  width: 24px;
  height: 24px;
  flex: none;
}

.app.bare {
  width: 42px;
  padding-left: 10px;
  border-bottom: 0;
}

.app.current {
  width: 160px;
  padding-left: 9px;
  background: #4b4c50;
}

.tray {
  display: flex;
  margin-left: auto;
  margin-right: 4px;
  padding-right: 9px;
  border-right: 1px solid #6a6b6e;
}

.weather {
  gap: 8px;
  margin-right: 10px;
  font-size: 14px;
}

.weather svg {
  width: 24px;
  height: 24px;
}

.ti {
  width: 24px;
}

.ti svg {
  width: 16px;
  height: 16px;
}

.lang {
  width: 37px;
}

.clock {
  width: 68px;
  flex-direction: column;
}

.notif {
  width: 36px;
}

.notif svg {
  width: 17px;
  height: 17px;
}
```
